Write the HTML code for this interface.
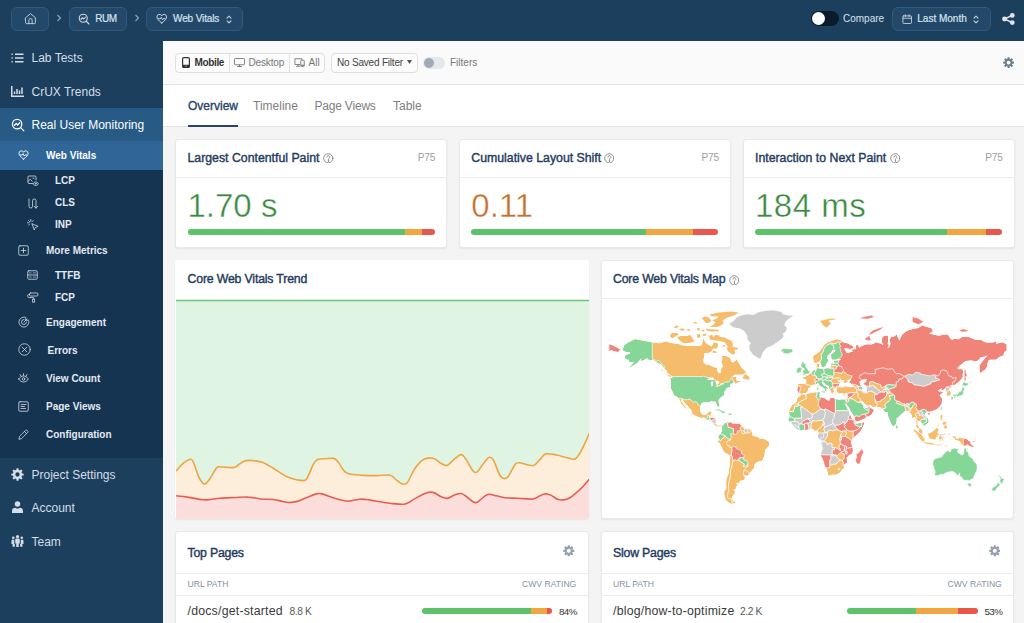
<!DOCTYPE html>
<html lang="en">
<head>
<meta charset="utf-8">
<title>Web Vitals - Real User Monitoring</title>
<style>
*{box-sizing:border-box;margin:0;padding:0}
html,body{width:1024px;height:623px;overflow:hidden}
body{font-family:"Liberation Sans",Arial,sans-serif;background:#f4f4f4;color:#1f3a5f;position:relative;-webkit-font-smoothing:antialiased}
.abs{position:absolute}
svg{display:block}
/* top bar */
#top{position:absolute;left:0;top:0;width:1024px;height:41px;background:#1c3f5e}
.crumb{position:absolute;top:7px;height:24px;border:1px solid #32587a;background:#224969;border-radius:6px;color:#d9e2ec;font-size:10px;line-height:22px;white-space:nowrap}
.crumb span{position:absolute;top:0;-webkit-text-stroke:.2px #d9e2ec}
.chev{position:absolute;top:13px;width:6px;height:10px}
/* sidebar */
#side{position:absolute;left:0;top:41px;width:163px;height:582px;background:#1c3f5e}
.nav1{position:absolute;left:0;width:163px;height:33px;color:#d4dde8;font-size:12px;line-height:33px}
.nav1 span{position:absolute;left:31.5px;top:1px;white-space:nowrap}
.nav1 svg{position:absolute;left:11px}
.nav2{position:absolute;left:0;width:163px;height:22px;color:#e3eaf2;font-size:10px;font-weight:bold;line-height:22px}
.nav2 span{position:absolute;top:.5px;white-space:nowrap}
.nav2 svg{position:absolute}
/* main */
#filter{position:absolute;left:163px;top:41px;width:861px;height:44px;background:#fafafa;border-bottom:1px solid #e4e4e4}
#tabs{position:absolute;left:163px;top:85px;width:861px;height:42px;background:#fff;border-bottom:1px solid #e2e2e2}
.tab{position:absolute;top:1px;height:41px;line-height:41px;font-size:12px;color:#808080;white-space:nowrap}
.ft{top:0;height:43px;line-height:43px;font-size:10px;white-space:nowrap}
.card{position:absolute;background:#fff;border-radius:3px;border:1px solid #e9e9e9;box-shadow:0 1px 2px rgba(0,0,0,.07)}
.in{position:absolute;left:-1px;top:-1px;right:-1px;bottom:-1px}
.ctitle{position:absolute;left:12px;font-size:12.3px;font-weight:normal;color:#233a5e;-webkit-text-stroke:.38px #233a5e;white-space:nowrap}
.p75{position:absolute;right:12px;font-size:10.2px;letter-spacing:-.3px;color:#a0a0a0}
.hr{position:absolute;left:0;right:0;height:1px;background:#ececec}
.big{position:absolute;left:12px;font-size:33px;font-weight:normal;white-space:nowrap;-webkit-text-stroke:.4px #fff}
.bar{position:absolute;height:6px;border-radius:3px;overflow:hidden;background:#5cc36a}
.bar i{position:absolute;top:0;height:6px}
.th{position:absolute;font-size:8.6px;color:#8792a0;letter-spacing:0;white-space:nowrap}
.url{position:absolute;font-size:12.3px;color:#3a3a3a;white-space:nowrap}
.cnt{position:absolute;font-size:10.2px;letter-spacing:-.4px;color:#5a5a5a;white-space:nowrap}
.pct{position:absolute;font-size:9.8px;letter-spacing:-.6px;color:#333;white-space:nowrap}
</style>
</head>
<body>
<div id="top">
<div class="crumb" style="left:11px;width:38px">
<svg class="abs" style="left:12px;top:4px" width="13" height="13" viewBox="0 0 24 24" fill="none" stroke="#c9d4e0" stroke-width="1.7" stroke-linejoin="round" stroke-linecap="round"><path d="M3 10.5 12 3l9 7.500V20a1.500 1.500 0 0 1-1.500 1.500h-15A1.500 1.500 0 0 1 3 20z"/><path d="M9 21.500V15a3 3 0 0 1 6 0v6.500"/></svg>
</div>
<svg class="chev" style="left:56px" viewBox="0 0 6 10" fill="none" stroke="#8ea3b8" stroke-width="1.200"><path d="M1.500 2 4.500 5 1.500 8"/></svg>
<div class="crumb" style="left:69px;width:58px">
<svg class="abs" style="left:8px;top:5px" width="12" height="12" viewBox="0 0 24 24" fill="none" stroke="#d3dce6" stroke-width="2.200" stroke-linecap="round" stroke-linejoin="round"><circle cx="10.500" cy="10.500" r="8"/><path d="M16.500 16.500 22 22"/><path d="M6 12.500 9 9.500 11.500 12 15 8"/></svg>
<span style="left:25.200px;letter-spacing:-.4px">RUM</span>
</div>
<svg class="chev" style="left:134px" viewBox="0 0 6 10" fill="none" stroke="#8ea3b8" stroke-width="1.200"><path d="M1.500 2 4.500 5 1.500 8"/></svg>
<div class="crumb" style="left:146px;width:97px">
<svg class="abs" style="left:8.500px;top:4.600px" width="11.500" height="11.500" viewBox="0 0 24 24" fill="none" stroke="#d3dce6" stroke-width="2" stroke-linecap="round" stroke-linejoin="round"><path d="M12 21C5 15.500 2 12 2 8.200A5.200 5.200 0 0 1 12 6a5.200 5.200 0 0 1 10 2.200C22 12 19 15.500 12 21z"/><path d="M5 12h4l2-3 2.500 5 1.500-2h4"/></svg>
<span style="left:26px;letter-spacing:-.12px">Web Vitals</span>
<svg class="abs" style="left:79px;top:7px" width="6" height="9" viewBox="0 0 6 9" fill="none" stroke="#c3cfdb" stroke-width="1.100" stroke-linecap="round" stroke-linejoin="round"><path d="M1 3.200 3 1.200 5 3.200M1 5.800 3 7.800 5 5.800"/></svg>
</div>
<div class="abs" style="left:811px;top:11px;width:28px;height:15px;border-radius:8px;background:#0c1a29"><div class="abs" style="left:1px;top:1px;width:13px;height:13px;border-radius:50%;background:#fff"></div></div>
<div class="abs" style="left:843px;top:12px;font-size:10px;line-height:13px;color:#dbe3ec">Compare</div>
<div class="crumb" style="left:892px;width:99px">
<svg class="abs" style="left:9px;top:6px" width="10.400" height="10.400" viewBox="0 0 22 22" fill="none" stroke="#d3dce6" stroke-width="1.800" stroke-linejoin="round" stroke-linecap="round"><rect x="2" y="4" width="18" height="16" rx="1.500"/><path d="M2 9h18M7 1.500v4M15 1.500v4"/></svg>
<span style="left:24.300px">Last Month</span>
<svg class="abs" style="left:80px;top:7px" width="6" height="9" viewBox="0 0 6 9" fill="none" stroke="#c3cfdb" stroke-width="1.100" stroke-linecap="round" stroke-linejoin="round"><path d="M1 3.200 3 1.200 5 3.200M1 5.800 3 7.800 5 5.800"/></svg>
</div>
<svg class="abs" style="left:1002px;top:13px" width="13" height="12" viewBox="0 0 26 24" fill="#dfe6ee"><circle cx="5" cy="12" r="4.800"/><circle cx="20.500" cy="4.800" r="4.800"/><circle cx="20.500" cy="19.200" r="4.800"/><path d="M5 12 20.500 4.800M5 12 20.500 19.200" stroke="#dfe6ee" stroke-width="3"/></svg>
</div>
<div id="side">
<div class="abs" style="left:0;top:128px;width:163px;height:289px;background:#153452"></div>
<div class="nav1" style="top:0.3px;"><svg style="left:11px;top:11.5px" width="13" height="10" viewBox="0 0 26 20" fill="none" stroke="#d4dde8" stroke-linecap="butt"><path d="M8 2.500h17M8 10h17M8 17.500h17" stroke-width="2.600"/><path d="M1 2.500h2.500M1 10h2.500M1 17.500h2.500" stroke-width="2.600"/></svg><span>Lab Tests</span></div>
<div class="nav1" style="top:33.7px;"><svg style="left:11px;top:11px" width="13" height="11" viewBox="0 0 26 22" fill="none" stroke="#d4dde8"><path d="M1.500 0v20.500H26" stroke-width="3"/><path d="M7 16v-5M12 16V6M17 16V9M22 16V3" stroke-width="3"/></svg><span>CrUX Trends</span></div>
<div class="nav1" style="top:67.0px;background:#275a85;color:#fff;"><svg style="left:11px;top:10px" width="14" height="14" viewBox="0 0 24 24" fill="none" stroke="#fff" stroke-width="2.200" stroke-linecap="round" stroke-linejoin="round"><circle cx="10.500" cy="10.500" r="8"/><path d="M16.500 16.500 22 22"/><path d="M6 12.500 9 9.500 11.500 12 15 8"/></svg><span>Real User Monitoring</span></div>
<div class="nav2" style="top:100.0px;height:29px;line-height:29px;background:#2f6697;color:#fff;"><svg style="left:18px;top:9px" width="11" height="10" viewBox="0 0 24 22" fill="none" stroke="#fff" stroke-width="2" stroke-linecap="round" stroke-linejoin="round"><path d="M12 20C5 14.500 2 11 2 7.200A5.200 5.200 0 0 1 12 5a5.200 5.200 0 0 1 10 2.200C22 11 19 14.500 12 20z"/><path d="M5 11h4l2-3 2.500 5 1.500-2h4"/></svg><span style="left:46px;top:.1px">Web Vitals</span></div>
<div class="nav2" style="top:128.5px;height:22px;line-height:22px;"><svg style="left:27px;top:5px" width="12" height="11" viewBox="0 0 24 22" fill="none" stroke="#d4dde8" stroke-width="1.6" stroke-linecap="round" stroke-linejoin="round"><path d="M10 17H4a2 2 0 0 1-2-2V4a2 2 0 0 1 2-2h12a2 2 0 0 1 2 2v6"/><path d="M2 13l4.500-4.500 4 4M12 6.500h2"/><path d="M12 17.500c1.500-2.700 3.500-3.500 5.500-3.500s4 .8 5.500 3.500c-1.500 2.700-3.500 3.500-5.500 3.500s-4-.8-5.500-3.500z"/><circle cx="17.500" cy="17.500" r="1"/></svg><span style="left:55px">LCP</span></div>
<div class="nav2" style="top:150.5px;height:22px;line-height:22px;"><svg style="left:27px;top:6px" width="12" height="11" viewBox="0 0 24 22" fill="none" stroke="#d4dde8" stroke-width="1.6" stroke-linecap="round" stroke-linejoin="round"><path d="M4 2v14.500a3.500 3.500 0 0 0 7 0V5.500a3.500 3.500 0 0 1 7 0V20"/><path d="M14.500 16.500l3.500 4 3.500-4"/></svg><span style="left:55px">CLS</span></div>
<div class="nav2" style="top:172.5px;height:22px;line-height:22px;"><svg style="left:27px;top:5px" width="12" height="12" viewBox="0 0 24 24" fill="none" stroke="#d4dde8" stroke-width="1.6" stroke-linecap="round" stroke-linejoin="round"><path d="M10 10l4.500 12 2-5 5-2z"/><path d="M7.500 1v3.500M1 7.500h3.500M3 3l2.200 2.200M12.500 3l-2.200 2.200M3 12.500l2.200-2.200"/></svg><span style="left:55px">INP</span></div>
<div class="nav2" style="top:198.0px;height:22px;line-height:22px;"><svg style="left:18px;top:5.5px" width="11" height="11" viewBox="0 0 22 22" fill="none" stroke="#d4dde8" stroke-width="1.6" stroke-linecap="round" stroke-linejoin="round"><rect x="1.500" y="1.500" width="19" height="19" rx="2.500"/><path d="M11 6.500v9M6.500 11h9"/></svg><span style="left:46px">More Metrics</span></div>
<div class="nav2" style="top:223.0px;height:22px;line-height:22px;"><svg style="left:27px;top:6px" width="11" height="10" viewBox="0 0 22 20" fill="none" stroke="#d4dde8" stroke-width="1.6" stroke-linecap="round" stroke-linejoin="round"><rect x="1.500" y="1.500" width="19" height="17" rx="2"/><path d="M1.500 10h19"/><path d="M5 5.800h3.500M5 14.200h3.500M12.500 5.800h4.500M12.500 14.200h4.500" stroke-width="1.200"/></svg><span style="left:55px">TTFB</span></div>
<div class="nav2" style="top:245.0px;height:22px;line-height:22px;"><svg style="left:27px;top:6px" width="12" height="11" viewBox="0 0 24 22" fill="none" stroke="#d4dde8" stroke-width="1.6" stroke-linecap="round" stroke-linejoin="round"><rect x="5" y="2" width="17" height="6" rx="2"/><path d="M5 5H3a1.500 1.500 0 0 0-1.500 1.500v3A1.500 1.500 0 0 0 3 11h9a1.500 1.500 0 0 1 1.500 1.500V14"/><path d="M12 14h3v6.500h-3z"/></svg><span style="left:55px">FCP</span></div>
<div class="nav2" style="top:270.0px;height:22px;line-height:22px;"><svg style="left:18px;top:5px" width="12" height="12" viewBox="0 0 24 24" fill="none" stroke="#d4dde8" stroke-width="1.6" stroke-linecap="round" stroke-linejoin="round"><path d="M13 2.200A10 10 0 1 0 21.800 11"/><path d="M12 7a5 5 0 1 0 5 5"/><path d="M12 12l6-6M15.500 2.500v6h6"/></svg><span style="left:46px">Engagement</span></div>
<div class="nav2" style="top:298.3px;height:22px;line-height:22px;"><svg style="left:18px;top:4px" width="13" height="13" viewBox="0 0 26 26" fill="none" stroke="#d4dde8" stroke-width="1.6" stroke-linecap="round" stroke-linejoin="round"><circle cx="13" cy="13" r="11.500"/><path d="M8.500 8.500l9 9M17.500 8.500l-9 9"/></svg><span style="left:47.5px">Errors</span></div>
<div class="nav2" style="top:326.3px;height:22px;line-height:22px;"><svg style="left:18px;top:6px" width="11" height="10" viewBox="0 0 22 20" fill="none" stroke="#d4dde8" stroke-width="1.6" stroke-linecap="round" stroke-linejoin="round"><path d="M1.500 12c2.500-4.500 6-6 9.500-6s7 1.500 9.500 6c-2.500 4.500-6 6-9.500 6s-7-1.500-9.500-6z"/><circle cx="11" cy="12" r="2.600"/><path d="M11 1.500V5M4 3l1.800 3M18 3l-1.800 3"/></svg><span style="left:46px">View Count</span></div>
<div class="nav2" style="top:354.3px;height:22px;line-height:22px;"><svg style="left:18px;top:5.5px" width="11" height="11" viewBox="0 0 22 22" fill="none" stroke="#d4dde8" stroke-width="1.6" stroke-linecap="round" stroke-linejoin="round"><rect x="1.500" y="1.500" width="19" height="19" rx="2.500"/><path d="M6 7h10M6 11h7M6 15h9"/></svg><span style="left:46px">Page Views</span></div>
<div class="nav2" style="top:382.3px;height:22px;line-height:22px;"><svg style="left:18px;top:5.5px" width="11" height="11" viewBox="0 0 22 22" fill="none" stroke="#d4dde8" stroke-width="1.6" stroke-linecap="round" stroke-linejoin="round"><path d="M2 20l1.200-5.500L15 2.800a2.300 2.300 0 0 1 3.300 0l.9.900a2.300 2.300 0 0 1 0 3.300L7.500 18.800z"/><path d="M13 5l4 4"/></svg><span style="left:46px">Configuration</span></div>
<div class="nav1" style="top:416.8px;"><svg style="left:11px;top:10px" width="13" height="13" viewBox="0 0 24 24"><g fill="#d4dde8"><rect x="10" y="0.500" width="4" height="6" rx="1" transform="rotate(0 12 12)"/><rect x="10" y="0.500" width="4" height="6" rx="1" transform="rotate(45 12 12)"/><rect x="10" y="0.500" width="4" height="6" rx="1" transform="rotate(90 12 12)"/><rect x="10" y="0.500" width="4" height="6" rx="1" transform="rotate(135 12 12)"/><rect x="10" y="0.500" width="4" height="6" rx="1" transform="rotate(180 12 12)"/><rect x="10" y="0.500" width="4" height="6" rx="1" transform="rotate(225 12 12)"/><rect x="10" y="0.500" width="4" height="6" rx="1" transform="rotate(270 12 12)"/><rect x="10" y="0.500" width="4" height="6" rx="1" transform="rotate(315 12 12)"/></g><circle cx="12" cy="12" r="6.300" fill="none" stroke="#d4dde8" stroke-width="4.600"/></svg><span>Project Settings</span></div>
<div class="nav1" style="top:450.0px;"><svg style="left:12px;top:10px" width="11" height="12" viewBox="0 0 22 24" fill="#d4dde8"><circle cx="11" cy="6" r="5.500"/><path d="M0 24v-4c0-4 3-6.500 6-6.500l5 2 5-2c3 0 6 2.500 6 6.500v4z"/></svg><span>Account</span></div>
<div class="nav1" style="top:483.8px;"><svg style="left:11px;top:10px" width="13" height="12" viewBox="0 0 26 24" fill="#d4dde8"><circle cx="13" cy="3.200" r="3.200"/><circle cx="4.500" cy="5.500" r="2.600"/><circle cx="21.500" cy="5.500" r="2.600"/><path d="M8.500 9.500c0-1.500 1-2.500 2.500-2.500h4c1.500 0 2.500 1 2.500 2.500V17h-2v7h-5v-7h-2z"/><path d="M1 12c0-1.500 1-2.500 2.500-2.500h3V18h1.200v5.500H3.200V18H1zM25 12c0-1.500-1-2.500-2.500-2.500h-3V18h-1.200v5.500h4.500V18H25z"/></svg><span>Team</span></div>
</div>
<div id="filter">
<div class="abs" style="left:12px;top:11.500px;width:150px;height:20px;border:1px solid #dfdfdf;border-radius:4px;background:#fcfcfc"></div>
<div class="abs" style="left:66px;top:12px;width:1px;height:19px;background:#e2e2e2"></div>
<div class="abs" style="left:126px;top:12px;width:1px;height:19px;background:#e2e2e2"></div>
<svg class="abs" style="left:19px;top:16px" width="8" height="11" viewBox="0 0 16 22"><rect x="1.200" y="1.200" width="13.600" height="19.600" rx="2.500" fill="none" stroke="#333" stroke-width="2.400"/><rect x="1.200" y="15.500" width="13.600" height="5" fill="#333"/><circle cx="8" cy="18" r="1.200" fill="#fff"/></svg>
<div class="abs ft" style="left:31.500px;color:#333;font-weight:bold;letter-spacing:-.35px">Mobile</div>
<svg class="abs" style="left:71px;top:17px" width="11" height="9" viewBox="0 0 22 18" fill="none" stroke="#777" stroke-width="1.800"><rect x="1" y="1" width="20" height="12.500" rx="1.500"/><path d="M6.500 17h9M11 13.500V17" stroke-width="2"/></svg>
<div class="abs ft" style="left:85.500px;color:#777;letter-spacing:-.15px">Desktop</div>
<svg class="abs" style="left:131px;top:17px" width="11" height="9" viewBox="0 0 22 18" fill="none" stroke="#777" stroke-width="1.800"><path d="M12 13H1.800V1.500h14V4M4 16.500h8M8 13v3.500" /><rect x="13.500" y="4.500" width="7" height="12.500" rx="1.200" fill="#fafafa"/><path d="M13.500 14.500h7" stroke-width="2.200"/></svg>
<div class="abs ft" style="left:145.500px;color:#777">All</div>
<div class="abs" style="left:168px;top:11.500px;width:87px;height:20px;border:1px solid #dfdfdf;border-radius:4px;background:#fcfcfc"></div>
<div class="abs ft" style="left:174px;color:#444;letter-spacing:-.2px">No Saved Filter</div>
<svg class="abs" style="left:244px;top:19px" width="5" height="4" viewBox="0 0 10 8"><path d="M0 0h10L5 8z" fill="#555"/></svg>
<div class="abs" style="left:260px;top:15.500px;width:22px;height:12px;border-radius:6px;background:#e4e9ee"><div class="abs" style="left:1px;top:1px;width:10px;height:10px;border-radius:50%;background:#a1abb5"></div></div>
<div class="abs ft" style="left:287px;color:#777">Filters</div>
<svg class="abs" style="left:839.5px;top:15.5px" width="11.2" height="11.2" viewBox="0 0 24 24"><g fill="#6d7e8f"><rect x="9.700" y="0.500" width="4.600" height="6" rx=".8" transform="rotate(0 12 12)"/><rect x="9.700" y="0.500" width="4.600" height="6" rx=".8" transform="rotate(45 12 12)"/><rect x="9.700" y="0.500" width="4.600" height="6" rx=".8" transform="rotate(90 12 12)"/><rect x="9.700" y="0.500" width="4.600" height="6" rx=".8" transform="rotate(135 12 12)"/><rect x="9.700" y="0.500" width="4.600" height="6" rx=".8" transform="rotate(180 12 12)"/><rect x="9.700" y="0.500" width="4.600" height="6" rx=".8" transform="rotate(225 12 12)"/><rect x="9.700" y="0.500" width="4.600" height="6" rx=".8" transform="rotate(270 12 12)"/><rect x="9.700" y="0.500" width="4.600" height="6" rx=".8" transform="rotate(315 12 12)"/></g><circle cx="12" cy="12" r="6.200" fill="none" stroke="#6d7e8f" stroke-width="4.200"/></svg>
</div>
<div id="tabs">
<div class="tab" style="left:25px;color:#28426c;-webkit-text-stroke:.35px #28426c">Overview</div>
<div class="abs" style="left:25px;top:39.500px;width:50px;height:2.500px;background:#28426c"></div>
<div class="tab" style="left:90px">Timeline</div>
<div class="tab" style="left:151.500px;letter-spacing:-.2px">Page Views</div>
<div class="tab" style="left:230px">Table</div>
</div>
<div id="content">
<div class="card" style="left:175px;top:139px;width:272.0px;height:108.800px"><div class="in" style="left:-0.5px"><div class="ctitle" style="top:12px;line-height:15px">Largest Contentful Paint</div><svg class="abs" style="left:147.5px;top:13.6px" width="10.600" height="10.600" viewBox="0 0 20 20" fill="none" stroke="#777" stroke-width="1.500" stroke-linecap="round"><circle cx="10" cy="10" r="8.700"/><path d="M7.300 7.800a2.800 2.800 0 1 1 4.200 2.400c-1 .6-1.500 1.100-1.500 2.100"/><circle cx="10" cy="15" r=".6" fill="#777"/></svg><div class="p75" style="top:12px;line-height:13px">P75</div><div class="hr" style="top:38px"></div><div class="big" style="top:47px;line-height:40px;color:#3b8b3f">1.70 s</div><div class="bar" style="left:12px;top:90.4px;width:247px;background:linear-gradient(90deg,#5cc36a 217.5px,#f1a640 217.5px,#f1a640 233.7px,#e9564b 233.7px)"></div></div></div>
<div class="card" style="left:459px;top:139px;width:271.8px;height:108.800px"><div class="in" style="left:-0.7px"><div class="ctitle" style="top:12px;line-height:15px">Cumulative Layout Shift</div><svg class="abs" style="left:144.5px;top:13.6px" width="10.600" height="10.600" viewBox="0 0 20 20" fill="none" stroke="#777" stroke-width="1.500" stroke-linecap="round"><circle cx="10" cy="10" r="8.700"/><path d="M7.300 7.800a2.800 2.800 0 1 1 4.200 2.400c-1 .6-1.500 1.100-1.500 2.100"/><circle cx="10" cy="15" r=".6" fill="#777"/></svg><div class="p75" style="top:12px;line-height:13px">P75</div><div class="hr" style="top:38px"></div><div class="big" style="top:47px;line-height:40px;color:#c8702b">0.11</div><div class="bar" style="left:12px;top:90.4px;width:247px;background:linear-gradient(90deg,#5cc36a 175.0px,#f1a640 175.0px,#f1a640 221.8px,#e9564b 221.8px)"></div></div></div>
<div class="card" style="left:743px;top:139px;width:271.5px;height:108.800px"><div class="in" style="left:-1.0px"><div class="ctitle" style="top:12px;line-height:15px">Interaction to Next Paint</div><svg class="abs" style="left:146.5px;top:13.6px" width="10.600" height="10.600" viewBox="0 0 20 20" fill="none" stroke="#777" stroke-width="1.500" stroke-linecap="round"><circle cx="10" cy="10" r="8.700"/><path d="M7.300 7.800a2.800 2.800 0 1 1 4.200 2.400c-1 .6-1.500 1.100-1.500 2.100"/><circle cx="10" cy="15" r=".6" fill="#777"/></svg><div class="p75" style="top:12px;line-height:13px">P75</div><div class="hr" style="top:38px"></div><div class="big" style="top:47px;line-height:40px;letter-spacing:.5px;color:#3b8b3f">184 ms</div><div class="bar" style="left:12px;top:90.4px;width:247px;background:linear-gradient(90deg,#5cc36a 191.7px,#f1a640 191.7px,#f1a640 231.2px,#e9564b 231.2px)"></div></div></div>
<div class="card" style="left:175px;top:260.300px;width:413.800px;height:258.700px;overflow:hidden;border:0"><div class="in" style="left:.5px;top:0"><div class="ctitle" style="top:11.900px;line-height:15px;letter-spacing:-.17px">Core Web Vitals Trend</div><svg class="abs" style="left:0;top:0" width="413.3" height="258.7" viewBox="0 0 413.3 258.7"><rect x="0" y="40" width="413.3" height="218.7" fill="#dff4e2"/><path d="M0.1 211.1C1.3 209.8 5.1 205.1 7.4 203.2C9.7 201.3 12.2 199.8 13.8 199.5C15.4 199.2 15.7 198.7 17.1 201.5C18.5 204.3 20.8 212.5 22.4 216.1C24.0 219.7 25.4 221.9 26.7 223.2C27.9 224.4 28.7 224.4 29.9 223.6C31.2 222.8 32.4 220.8 34.2 218.2C36.0 215.6 38.9 209.8 40.7 207.9C42.5 206.0 42.1 207.1 45.0 207.0C47.9 206.9 54.9 208.0 57.9 207.5C61.0 207.0 61.5 205.3 63.3 204.2C65.1 203.1 66.3 201.6 68.6 201.0C70.9 200.4 74.1 200.3 77.2 200.6C80.2 200.8 83.5 201.2 86.9 202.5C90.3 203.8 93.7 206.2 97.6 208.5C101.5 210.8 106.5 214.6 110.5 216.5C114.5 218.4 118.3 219.2 121.3 219.9C124.4 220.5 127.0 221.0 128.8 220.4C130.6 219.8 130.6 219.2 132.0 216.5C133.4 213.8 135.8 207.0 137.4 204.2C139.0 201.4 139.7 200.4 141.7 199.5C143.7 198.6 146.5 198.9 149.2 198.7C151.9 198.5 155.7 197.8 157.8 198.4C160.0 199.0 160.3 199.9 162.1 202.1C163.9 204.2 166.3 209.3 168.5 211.3C170.7 213.3 171.8 213.6 175.0 214.3C178.2 215.0 183.6 215.2 187.9 215.4C192.2 215.6 196.4 215.6 200.8 215.6C205.2 215.6 211.1 214.6 214.2 215.2C217.3 215.8 217.5 217.9 219.5 219.3C221.5 220.7 224.0 223.3 226.0 223.8C228.0 224.3 229.2 225.1 231.4 222.5C233.5 219.9 236.2 212.3 238.9 208.5C241.6 204.7 244.5 201.2 247.5 199.5C250.5 197.8 254.2 197.6 257.1 198.2C260.0 198.8 262.4 202.0 264.7 203.2C267.0 204.4 269.0 206.1 271.1 205.5C273.2 204.9 275.2 201.7 277.5 199.9C279.8 198.1 283.0 194.6 285.1 194.6C287.2 194.6 288.4 197.2 290.4 199.9C292.4 202.6 295.1 208.7 296.9 210.7C298.7 212.7 299.4 213.1 301.2 211.8C303.0 210.6 305.6 205.6 307.6 203.2C309.6 200.8 311.4 197.9 313.0 197.4C314.6 196.8 315.5 197.0 317.3 199.9C319.1 202.8 321.9 211.9 323.7 215.0C325.5 218.1 326.6 218.3 328.0 218.6C329.4 218.8 330.5 218.8 332.3 216.5C334.1 214.2 337.0 207.2 338.8 204.9C340.6 202.6 340.1 202.6 343.1 202.7C346.1 202.8 353.6 206.2 357.0 205.7C360.4 205.2 361.4 201.9 363.5 199.9C365.6 197.9 367.0 194.7 369.9 193.9C372.8 193.1 377.1 194.3 380.7 195.0C384.3 195.7 388.4 197.1 391.4 197.8C394.4 198.5 396.8 200.0 398.9 199.1C401.0 198.2 402.5 195.3 404.3 192.4C406.1 189.5 408.2 184.9 409.7 181.7C411.2 178.5 412.7 174.5 413.3 173.1L413.3 258.7L0 258.7Z" fill="#fdeedb"/><path d="M0.1 235.8C2.0 236.0 7.3 236.4 11.7 237.1C16.1 237.7 22.9 239.3 26.7 239.7C30.4 240.1 31.3 239.8 34.2 239.5C37.1 239.2 39.8 238.5 43.9 238.2C48.0 237.9 54.4 237.7 59.0 237.5C63.6 237.3 67.5 236.8 71.8 237.1C76.1 237.3 80.4 238.6 84.7 239.0C89.0 239.4 94.0 239.1 97.6 239.5C101.2 239.9 103.5 240.9 106.2 241.4C108.9 241.9 111.2 242.5 113.7 242.5C116.2 242.5 118.3 242.3 121.3 241.4C124.4 240.5 128.8 238.3 132.0 237.1C135.2 235.8 138.3 234.4 140.6 233.9C142.9 233.4 143.1 233.2 146.0 233.9C148.9 234.6 154.1 236.8 157.8 238.0C161.6 239.2 165.6 240.3 168.5 240.8C171.4 241.3 172.5 241.1 175.0 240.8C177.5 240.5 181.1 239.4 183.6 239.2C186.1 239.0 187.1 239.2 190.0 239.5C192.9 239.8 196.2 240.5 200.8 241.2C205.4 241.9 212.7 243.1 217.4 243.6C222.1 244.1 225.6 244.8 229.2 244.0C232.8 243.2 235.5 240.4 238.9 238.6C242.3 236.8 246.6 234.2 249.6 233.2C252.6 232.2 254.6 231.8 257.1 232.4C259.6 232.9 262.4 235.5 264.7 236.5C267.0 237.5 268.8 238.6 271.1 238.4C273.4 238.1 276.3 235.8 278.6 235.0C280.9 234.2 283.1 233.2 285.1 233.5C287.1 233.8 288.4 235.1 290.4 236.5C292.4 237.9 295.1 240.8 296.9 241.8C298.7 242.8 299.4 243.1 301.2 242.3C303.0 241.5 305.6 238.4 307.6 237.1C309.6 235.8 310.9 234.5 313.0 234.3C315.1 234.1 317.8 235.2 320.5 235.8C323.2 236.4 325.5 237.4 329.1 237.8C332.7 238.2 337.4 238.0 342.0 238.2C346.6 238.4 353.2 239.5 357.0 239.0C360.8 238.5 362.4 236.2 364.5 235.4C366.6 234.5 368.1 233.9 369.9 233.9C371.7 233.9 373.3 234.5 375.3 235.4C377.3 236.3 379.7 238.6 381.7 239.3C383.7 240.1 385.1 240.1 387.1 239.9C389.1 239.7 391.1 239.5 393.6 238.0C396.1 236.5 399.7 233.3 402.2 231.1C404.7 228.9 406.8 226.7 408.6 224.7C410.4 222.7 412.5 220.2 413.3 219.3L413.3 258.7L0 258.7Z" fill="#fbdedc"/><path d="M0 40.600H413.3" stroke="#68c772" stroke-width="1.500" fill="none"/><path d="M0.1 211.1C1.3 209.8 5.1 205.1 7.4 203.2C9.7 201.3 12.2 199.8 13.8 199.5C15.4 199.2 15.7 198.7 17.1 201.5C18.5 204.3 20.8 212.5 22.4 216.1C24.0 219.7 25.4 221.9 26.7 223.2C27.9 224.4 28.7 224.4 29.9 223.6C31.2 222.8 32.4 220.8 34.2 218.2C36.0 215.6 38.9 209.8 40.7 207.9C42.5 206.0 42.1 207.1 45.0 207.0C47.9 206.9 54.9 208.0 57.9 207.5C61.0 207.0 61.5 205.3 63.3 204.2C65.1 203.1 66.3 201.6 68.6 201.0C70.9 200.4 74.1 200.3 77.2 200.6C80.2 200.8 83.5 201.2 86.9 202.5C90.3 203.8 93.7 206.2 97.6 208.5C101.5 210.8 106.5 214.6 110.5 216.5C114.5 218.4 118.3 219.2 121.3 219.9C124.4 220.5 127.0 221.0 128.8 220.4C130.6 219.8 130.6 219.2 132.0 216.5C133.4 213.8 135.8 207.0 137.4 204.2C139.0 201.4 139.7 200.4 141.7 199.5C143.7 198.6 146.5 198.9 149.2 198.7C151.9 198.5 155.7 197.8 157.8 198.4C160.0 199.0 160.3 199.9 162.1 202.1C163.9 204.2 166.3 209.3 168.5 211.3C170.7 213.3 171.8 213.6 175.0 214.3C178.2 215.0 183.6 215.2 187.9 215.4C192.2 215.6 196.4 215.6 200.8 215.6C205.2 215.6 211.1 214.6 214.2 215.2C217.3 215.8 217.5 217.9 219.5 219.3C221.5 220.7 224.0 223.3 226.0 223.8C228.0 224.3 229.2 225.1 231.4 222.5C233.5 219.9 236.2 212.3 238.9 208.5C241.6 204.7 244.5 201.2 247.5 199.5C250.5 197.8 254.2 197.6 257.1 198.2C260.0 198.8 262.4 202.0 264.7 203.2C267.0 204.4 269.0 206.1 271.1 205.5C273.2 204.9 275.2 201.7 277.5 199.9C279.8 198.1 283.0 194.6 285.1 194.6C287.2 194.6 288.4 197.2 290.4 199.9C292.4 202.6 295.1 208.7 296.9 210.7C298.7 212.7 299.4 213.1 301.2 211.8C303.0 210.6 305.6 205.6 307.6 203.2C309.6 200.8 311.4 197.9 313.0 197.4C314.6 196.8 315.5 197.0 317.3 199.9C319.1 202.8 321.9 211.9 323.7 215.0C325.5 218.1 326.6 218.3 328.0 218.6C329.4 218.8 330.5 218.8 332.3 216.5C334.1 214.2 337.0 207.2 338.8 204.9C340.6 202.6 340.1 202.6 343.1 202.7C346.1 202.8 353.6 206.2 357.0 205.7C360.4 205.2 361.4 201.9 363.5 199.9C365.6 197.9 367.0 194.7 369.9 193.9C372.8 193.1 377.1 194.3 380.7 195.0C384.3 195.7 388.4 197.1 391.4 197.8C394.4 198.5 396.8 200.0 398.9 199.1C401.0 198.2 402.5 195.3 404.3 192.4C406.1 189.5 408.2 184.9 409.7 181.7C411.2 178.5 412.7 174.5 413.3 173.1" stroke="#eca540" stroke-width="1.600" fill="none"/><path d="M0.1 235.8C2.0 236.0 7.3 236.4 11.7 237.1C16.1 237.7 22.9 239.3 26.7 239.7C30.4 240.1 31.3 239.8 34.2 239.5C37.1 239.2 39.8 238.5 43.9 238.2C48.0 237.9 54.4 237.7 59.0 237.5C63.6 237.3 67.5 236.8 71.8 237.1C76.1 237.3 80.4 238.6 84.7 239.0C89.0 239.4 94.0 239.1 97.6 239.5C101.2 239.9 103.5 240.9 106.2 241.4C108.9 241.9 111.2 242.5 113.7 242.5C116.2 242.5 118.3 242.3 121.3 241.4C124.4 240.5 128.8 238.3 132.0 237.1C135.2 235.8 138.3 234.4 140.6 233.9C142.9 233.4 143.1 233.2 146.0 233.9C148.9 234.6 154.1 236.8 157.8 238.0C161.6 239.2 165.6 240.3 168.5 240.8C171.4 241.3 172.5 241.1 175.0 240.8C177.5 240.5 181.1 239.4 183.6 239.2C186.1 239.0 187.1 239.2 190.0 239.5C192.9 239.8 196.2 240.5 200.8 241.2C205.4 241.9 212.7 243.1 217.4 243.6C222.1 244.1 225.6 244.8 229.2 244.0C232.8 243.2 235.5 240.4 238.9 238.6C242.3 236.8 246.6 234.2 249.6 233.2C252.6 232.2 254.6 231.8 257.1 232.4C259.6 232.9 262.4 235.5 264.7 236.5C267.0 237.5 268.8 238.6 271.1 238.4C273.4 238.1 276.3 235.8 278.6 235.0C280.9 234.2 283.1 233.2 285.1 233.5C287.1 233.8 288.4 235.1 290.4 236.5C292.4 237.9 295.1 240.8 296.9 241.8C298.7 242.8 299.4 243.1 301.2 242.3C303.0 241.5 305.6 238.4 307.6 237.1C309.6 235.8 310.9 234.5 313.0 234.3C315.1 234.1 317.8 235.2 320.5 235.8C323.2 236.4 325.5 237.4 329.1 237.8C332.7 238.2 337.4 238.0 342.0 238.2C346.6 238.4 353.2 239.5 357.0 239.0C360.8 238.5 362.4 236.2 364.5 235.4C366.6 234.5 368.1 233.9 369.9 233.9C371.7 233.9 373.3 234.5 375.3 235.4C377.3 236.3 379.7 238.6 381.7 239.3C383.7 240.1 385.1 240.1 387.1 239.9C389.1 239.7 391.1 239.5 393.6 238.0C396.1 236.5 399.7 233.3 402.2 231.1C404.7 228.9 406.8 226.7 408.6 224.7C410.4 222.7 412.5 220.2 413.3 219.3" stroke="#e85d51" stroke-width="1.600" fill="none"/></svg></div></div>
<div class="card" style="left:601px;top:260.300px;width:413.300px;height:258.700px;overflow:hidden"><div class="in"><div class="ctitle" style="top:11.900px;line-height:15px;letter-spacing:-.18px">Core Web Vitals Map</div><svg class="abs" style="left:127.8px;top:14.5px" width="10.600" height="10.600" viewBox="0 0 20 20" fill="none" stroke="#777" stroke-width="1.500" stroke-linecap="round"><circle cx="10" cy="10" r="8.700"/><path d="M7.300 7.800a2.800 2.800 0 1 1 4.200 2.400c-1 .6-1.500 1.100-1.500 2.100"/><circle cx="10" cy="15" r=".6" fill="#777"/></svg><div class="hr" style="top:37.500px"></div><svg class="abs" style="left:0;top:0" width="413.3" height="258.7" viewBox="0 0 413.3 258.7"><defs><clipPath id="cNA"><path d="M21.5 90.1L23.7 85.1L27.0 82.8L34.2 79.2L41.3 80.8L51.3 82.6L57.9 83.2L65.6 81.2L68.9 82.8L77.7 83.9L81.1 85.3L87.7 86.0L94.3 86.0L100.9 85.3L102.0 78.0L104.8 82.8L107.5 84.7L110.8 86.6L112.5 82.4L116.4 82.8L117.1 85.6L116.4 88.4L111.9 88.8L110.8 91.2L107.5 92.9L103.7 92.9L102.6 99.8L102.2 101.7L104.8 104.6L108.6 104.9L113.0 107.2L116.0 107.6L116.4 110.7L118.0 113.2L119.7 113.0L119.7 109.2L121.9 106.2L120.2 101.9L121.3 98.9L120.8 95.7L125.2 95.9L129.6 98.1L130.1 101.4L132.3 102.5L134.6 100.6L135.7 99.3L138.4 103.8L140.6 107.7L143.9 110.7L145.4 112.2L141.7 114.8L136.2 114.7L133.5 114.8L130.1 118.0L128.5 119.7L131.2 117.3L135.7 116.6L135.1 118.7L135.7 120.5L139.5 121.2L140.6 119.7L139.5 121.7L136.2 122.8L134.0 124.2L134.0 122.1L132.9 122.1L129.6 123.9L128.7 125.5L129.6 126.6L125.4 127.9L125.0 129.4L123.5 130.7L123.0 132.6L123.3 134.8L120.8 136.5L118.6 138.3L117.1 140.7L118.4 145.1L118.1 147.0L116.6 145.8L115.5 143.7L114.4 141.3L112.5 141.5L109.7 140.9L108.1 142.3L105.9 141.9L103.1 141.8L99.8 143.7L99.4 146.1L98.9 150.2L100.6 153.8L102.6 155.1L105.3 154.6L107.0 152.5L107.5 151.7L110.8 151.3L110.3 153.6L109.5 155.9L108.9 157.7L111.9 157.7L114.9 158.7L114.5 161.5L114.6 163.3L115.8 164.9L117.5 165.7L119.1 164.9L121.4 165.8L120.9 167.4L120.4 166.3L118.9 165.7L118.1 167.3L116.4 166.3L115.3 166.2L114.5 165.8L113.0 164.3L112.2 163.3L110.3 161.1L108.1 160.4L105.1 159.3L103.1 157.5L100.4 157.9L96.7 156.7L92.6 155.0L90.4 152.6L90.7 150.4L87.7 147.2L86.0 145.2L84.4 143.7L82.4 140.9L81.8 139.7L80.2 139.1L80.5 141.3L82.4 143.9L84.4 146.7L85.2 148.2L86.0 149.3L85.1 149.1L83.0 147.2L81.6 145.1L80.0 143.7L79.1 140.9L77.6 138.3L76.1 136.4L73.8 135.8L72.2 132.9L71.7 131.6L70.0 128.4L69.8 124.8L70.0 120.5L69.3 117.4L71.7 118.7L71.1 116.6L69.5 115.1L66.2 113.0L65.6 110.7L63.4 108.5L62.3 106.9L59.5 103.8L56.2 102.5L52.9 100.1L48.0 99.8L45.8 98.1L43.0 99.8L39.7 100.9L40.8 97.8L38.0 100.6L36.4 102.7L33.6 104.6L30.3 106.6L27.0 108.0L29.8 106.2L33.1 101.9L28.1 102.0L28.1 99.8L24.8 98.9L23.7 96.8L25.4 94.7L29.2 93.8L29.2 92.1L25.4 92.1Z"/></clipPath><clipPath id="cSA"><path d="M121.5 165.9L123.0 165.1L123.5 163.6L124.8 163.0L127.4 161.9L128.2 163.2L129.6 162.0L131.5 163.7L134.0 163.7L136.2 164.0L138.4 163.6L139.5 164.9L140.6 166.0L142.3 167.7L143.9 168.8L147.2 169.0L149.4 170.1L150.5 170.8L151.6 173.4L151.6 175.4L153.9 176.2L157.2 177.1L158.3 178.4L161.0 178.6L163.8 179.3L166.0 180.7L168.0 181.5L168.4 183.7L168.0 185.9L166.0 187.9L164.3 189.8L163.8 192.6L163.6 195.5L162.7 197.8L161.6 200.1L160.5 201.2L157.7 201.5L155.5 202.6L153.3 204.7L153.2 207.7L151.3 210.1L149.1 212.5L147.8 214.4L146.4 215.5L144.5 215.4L142.4 214.4L143.7 216.9L143.3 219.4L139.0 220.7L138.1 222.7L135.1 223.3L136.2 225.3L134.8 226.6L134.6 228.7L132.3 230.0L134.0 232.1L132.3 235.0L130.7 236.4L131.2 239.0L131.2 240.1L134.6 242.8L132.9 243.4L130.1 243.6L127.4 242.3L125.2 240.1L124.1 237.8L123.5 234.2L123.5 231.4L125.2 229.4L125.7 226.6L125.2 224.6L125.5 221.4L125.7 218.4L126.8 216.3L127.9 213.2L127.9 209.5L129.0 205.9L129.1 201.8L129.4 197.8L129.1 195.8L127.4 194.3L124.1 192.6L122.6 190.7L121.6 188.7L120.2 185.9L118.8 183.1L117.2 182.0L117.1 180.4L118.2 179.0L118.6 178.2L117.5 177.8L117.7 176.5L118.6 174.8L119.7 174.0L120.2 172.6L121.5 171.2L121.3 168.8L120.9 167.4Z"/></clipPath><clipPath id="cAFRICA"><path d="M200.3 134.2L204.4 135.0L206.8 134.0L210.1 132.8L214.5 132.6L217.8 132.3L218.9 132.6L218.2 134.5L218.7 135.8L217.8 136.7L219.5 137.4L221.4 137.8L223.7 138.5L225.6 140.1L228.3 140.9L228.9 139.1L228.9 138.3L232.2 138.0L234.4 139.2L238.8 140.1L241.0 139.5L242.4 139.8L244.5 139.7L245.3 141.9L244.6 143.9L242.8 141.3L243.9 143.9L246.0 148.4L247.6 150.7L247.9 153.6L249.3 155.3L250.4 158.2L252.6 160.4L254.4 161.5L254.6 162.7L255.9 163.9L258.6 163.0L263.3 162.2L262.8 164.3L260.8 168.8L259.7 170.4L257.5 173.0L254.2 176.0L252.6 177.5L251.1 178.5L250.4 180.4L249.8 182.6L250.4 184.8L251.5 187.0L251.7 191.5L250.9 193.4L247.6 195.2L246.0 197.5L245.2 197.5L245.8 200.1L246.0 202.4L243.2 204.1L243.0 207.7L241.0 209.5L239.9 211.3L237.7 213.2L235.1 214.4L231.1 214.6L228.9 215.4L227.1 214.6L226.9 211.9L225.6 208.9L223.9 205.9L222.8 201.2L221.1 197.8L219.8 194.9L220.6 192.1L221.9 188.7L221.4 185.4L220.4 182.0L219.8 180.4L217.3 178.2L216.7 176.3L217.3 174.5L217.5 172.6L217.3 171.0L216.2 170.3L214.5 170.5L213.4 170.7L211.8 168.6L209.6 168.4L207.9 168.9L204.6 170.1L201.8 169.7L198.5 170.5L196.3 169.3L194.1 167.8L192.1 166.0L191.4 164.3L190.3 163.2L188.4 161.7L187.5 159.1L188.6 157.6L188.8 154.2L188.0 151.9L189.2 149.0L190.8 146.1L192.5 144.1L194.7 142.7L196.0 141.5L196.0 139.5L197.4 137.3L199.3 136.4Z"/></clipPath><clipPath id="cEURASIA"><path d="M200.6 133.9L199.9 133.1L198.6 132.4L197.0 132.6L197.1 130.7L196.3 130.3L197.1 127.5L196.7 124.8L198.0 123.9L201.8 124.3L204.8 124.3L205.5 122.7L205.6 120.8L204.4 119.1L201.6 118.0L201.6 117.4L205.0 117.0L204.8 115.6L207.0 115.8L208.6 114.0L210.7 113.1L211.5 111.9L212.1 110.7L214.5 110.0L216.3 109.4L215.8 106.9L215.8 104.6L218.4 103.5L218.2 105.4L217.8 107.7L218.8 109.2L220.0 108.9L222.5 109.2L225.0 108.5L227.2 108.2L228.3 108.6L230.0 107.4L230.0 104.6L231.1 103.5L233.3 104.3L233.6 102.5L232.7 101.1L237.7 100.6L240.1 99.8L238.2 98.8L234.4 99.4L232.1 99.9L230.3 98.1L230.3 94.7L234.4 91.2L234.7 90.1L231.1 89.9L230.3 92.1L226.1 95.9L225.8 98.6L227.5 100.1L225.2 103.8L224.4 105.8L222.6 106.9L221.0 106.9L220.6 105.4L219.3 102.2L218.6 101.1L215.6 102.8L214.5 103.0L212.9 101.4L212.3 98.1L212.5 96.1L216.2 93.7L218.9 91.5L221.1 88.4L223.3 85.1L226.7 82.6L230.0 81.4L235.1 79.6L237.7 79.8L241.0 81.2L243.2 82.8L246.5 83.3L252.0 86.0L252.4 88.4L248.7 89.0L244.3 88.1L243.2 88.4L244.9 91.2L245.4 92.4L248.2 93.3L248.7 92.1L251.5 91.9L250.9 89.4L254.8 89.0L255.3 84.7L257.5 85.3L258.1 87.9L259.7 86.4L265.3 84.3L269.7 84.5L273.0 83.7L274.1 82.2L278.5 83.3L280.7 84.1L282.4 85.3L280.7 81.8L280.7 78.8L282.9 75.7L286.8 75.7L287.3 78.8L286.8 83.7L287.9 85.6L286.2 88.4L288.4 86.6L289.5 83.7L288.4 79.8L290.1 77.1L292.8 76.7L295.6 74.6L297.2 77.8L298.3 80.8L299.5 77.8L301.7 74.0L306.1 70.7L311.6 69.1L317.1 68.0L321.8 65.2L324.8 66.8L330.3 68.0L332.0 71.4L328.1 73.5L331.4 74.2L338.1 75.7L342.5 74.6L346.9 74.6L349.6 78.8L351.3 79.8L353.5 78.8L357.9 79.2L361.2 76.7L367.8 77.1L372.2 78.8L374.5 80.0L380.0 79.8L383.3 81.8L385.5 82.6L391.0 82.4L394.9 81.8L395.4 83.7L400.9 82.2L405.3 84.1L408.6 85.3L413.1 87.5L416.6 89.4L414.2 92.1L410.9 91.5L407.5 90.3L405.3 91.2L403.1 92.1L402.6 95.6L398.7 96.8L394.9 99.8L389.9 99.8L387.7 100.1L386.6 103.3L386.4 105.8L385.3 108.0L383.3 110.4L381.6 111.0L379.6 113.7L378.6 110.7L378.5 105.4L380.0 103.3L383.3 98.9L386.6 95.6L383.3 96.8L380.0 97.3L377.2 100.6L374.5 101.4L370.6 100.6L364.5 100.9L361.2 103.8L359.0 105.4L356.3 108.2L358.5 109.2L360.7 108.9L362.3 110.7L361.8 113.7L361.8 117.3L359.6 120.1L356.8 122.8L353.5 125.1L351.3 125.5L351.0 125.8L349.9 127.5L347.4 129.0L348.4 130.6L349.5 132.6L349.5 134.5L349.1 135.2L347.4 135.5L346.1 135.8L346.3 133.9L346.6 131.7L344.7 131.4L345.0 129.4L343.9 128.8L341.4 130.1L340.6 130.3L340.8 127.7L338.1 129.8L336.7 130.1L338.1 132.0L340.0 131.6L341.9 132.4L339.5 133.9L338.4 135.2L339.7 137.0L341.1 139.1L341.1 140.3L340.8 141.9L340.3 143.7L338.9 146.1L337.5 147.6L335.9 149.0L332.9 150.2L329.8 151.3L328.1 151.6L328.5 152.7L327.6 151.3L325.9 151.2L324.5 152.4L323.5 154.2L324.3 155.9L326.3 157.6L327.4 160.4L327.2 162.7L325.0 163.9L324.5 164.8L322.6 165.9L322.5 164.3L321.0 163.7L320.3 162.4L319.3 161.5L318.1 160.5L317.1 160.6L316.9 162.7L316.2 165.1L317.4 166.2L317.7 167.7L319.1 168.2L319.5 168.6L320.9 170.4L321.0 172.3L321.7 173.9L321.0 174.0L318.5 172.2L317.7 170.4L317.4 168.4L316.5 167.7L315.2 166.6L315.4 164.3L315.7 162.1L315.1 159.9L314.6 157.3L313.6 156.7L311.9 157.8L310.8 157.4L311.0 155.3L309.9 153.3L308.6 152.2L308.1 150.4L306.6 150.4L305.0 151.0L302.8 151.3L302.2 152.8L300.6 153.6L297.6 156.8L295.4 158.2L295.4 160.8L294.8 164.0L293.9 165.1L293.1 165.6L292.3 166.4L291.0 164.6L289.5 161.5L288.4 158.7L287.3 155.9L287.1 154.2L287.0 151.9L286.4 151.7L284.6 152.1L282.9 150.4L282.4 149.0L281.3 148.4L280.4 147.2L277.4 146.9L274.7 147.0L271.3 146.5L269.9 145.1L268.9 144.6L266.9 145.4L264.7 144.3L262.8 142.5L261.9 141.1L260.6 140.9L259.7 141.9L260.6 143.7L262.2 145.5L262.8 147.2L263.4 146.1L263.7 147.2L263.6 148.1L266.4 148.2L268.6 146.3L268.9 145.7L269.2 147.8L271.5 148.9L272.8 150.2L271.3 152.5L270.6 154.2L268.6 155.4L267.5 156.1L265.8 156.8L264.4 158.1L260.8 159.6L256.7 161.2L254.8 161.3L254.0 159.0L253.9 157.0L252.0 154.2L250.0 151.3L248.7 148.4L247.1 146.1L245.4 143.7L245.3 141.9L244.5 139.7L245.3 138.3L245.6 137.3L246.4 135.5L246.4 133.9L246.7 133.0L244.9 133.0L243.2 133.8L240.6 132.9L238.8 133.5L237.1 132.9L236.0 131.0L235.7 129.4L235.7 128.7L237.1 128.1L238.8 127.3L241.5 127.2L243.8 126.2L245.4 126.0L247.6 127.2L250.6 127.5L252.6 126.8L252.6 125.5L250.9 124.3L248.5 122.5L247.6 121.7L249.3 120.8L250.1 119.1L248.2 119.4L245.7 120.3L247.1 121.6L245.8 122.1L243.8 122.9L242.6 121.6L243.9 120.6L241.9 119.9L240.7 120.1L239.6 121.7L238.3 123.8L237.6 125.1L237.8 126.7L238.7 127.2L236.9 127.5L235.7 128.1L235.5 127.7L233.3 127.7L233.1 128.8L231.9 128.3L232.2 130.1L233.3 131.4L233.3 131.7L232.2 132.1L232.4 133.3L231.5 133.3L230.7 132.9L230.2 131.4L229.4 129.7L228.2 128.1L228.3 126.4L227.2 125.5L224.4 124.2L223.3 122.8L222.6 121.9L221.8 122.1L221.9 121.2L220.5 121.6L220.4 123.1L221.8 124.2L222.8 125.8L224.4 126.3L227.2 128.5L227.2 128.8L225.6 128.3L225.1 129.2L225.7 130.1L225.0 131.0L224.1 131.4L224.4 130.1L223.9 128.7L222.6 127.7L220.4 126.6L218.4 125.0L218.1 123.6L216.5 122.9L215.1 123.9L212.6 124.4L210.3 124.7L210.3 125.8L209.2 127.1L207.1 128.5L206.5 129.6L207.0 130.5L206.0 131.7L204.6 132.9L201.9 133.0Z"/></clipPath><clipPath id="cmap"><rect x="8.3" y="40" width="397.1" height="215"/></clipPath></defs><g clip-path="url(#cmap)" stroke="#fff" stroke-width=".7" stroke-linejoin="round"><g clip-path="url(#cNA)"><path d="M21.5 90.1L23.7 85.1L27.0 82.8L34.2 79.2L41.3 80.8L51.3 82.6L57.9 83.2L65.6 81.2L68.9 82.8L77.7 83.9L81.1 85.3L87.7 86.0L94.3 86.0L100.9 85.3L102.0 78.0L104.8 82.8L107.5 84.7L110.8 86.6L112.5 82.4L116.4 82.8L117.1 85.6L116.4 88.4L111.9 88.8L110.8 91.2L107.5 92.9L103.7 92.9L102.6 99.8L102.2 101.7L104.8 104.6L108.6 104.9L113.0 107.2L116.0 107.6L116.4 110.7L118.0 113.2L119.7 113.0L119.7 109.2L121.9 106.2L120.2 101.9L121.3 98.9L120.8 95.7L125.2 95.9L129.6 98.1L130.1 101.4L132.3 102.5L134.6 100.6L135.7 99.3L138.4 103.8L140.6 107.7L143.9 110.7L145.4 112.2L141.7 114.8L136.2 114.7L133.5 114.8L130.1 118.0L128.5 119.7L131.2 117.3L135.7 116.6L135.1 118.7L135.7 120.5L139.5 121.2L140.6 119.7L139.5 121.7L136.2 122.8L134.0 124.2L134.0 122.1L132.9 122.1L129.6 123.9L128.7 125.5L129.6 126.6L125.4 127.9L125.0 129.4L123.5 130.7L123.0 132.6L123.3 134.8L120.8 136.5L118.6 138.3L117.1 140.7L118.4 145.1L118.1 147.0L116.6 145.8L115.5 143.7L114.4 141.3L112.5 141.5L109.7 140.9L108.1 142.3L105.9 141.9L103.1 141.8L99.8 143.7L99.4 146.1L98.9 150.2L100.6 153.8L102.6 155.1L105.3 154.6L107.0 152.5L107.5 151.7L110.8 151.3L110.3 153.6L109.5 155.9L108.9 157.7L111.9 157.7L114.9 158.7L114.5 161.5L114.6 163.3L115.8 164.9L117.5 165.7L119.1 164.9L121.4 165.8L120.9 167.4L120.4 166.3L118.9 165.7L118.1 167.3L116.4 166.3L115.3 166.2L114.5 165.8L113.0 164.3L112.2 163.3L110.3 161.1L108.1 160.4L105.1 159.3L103.1 157.5L100.4 157.9L96.7 156.7L92.6 155.0L90.4 152.6L90.7 150.4L87.7 147.2L86.0 145.2L84.4 143.7L82.4 140.9L81.8 139.7L80.2 139.1L80.5 141.3L82.4 143.9L84.4 146.7L85.2 148.2L86.0 149.3L85.1 149.1L83.0 147.2L81.6 145.1L80.0 143.7L79.1 140.9L77.6 138.3L76.1 136.4L73.8 135.8L72.2 132.9L71.7 131.6L70.0 128.4L69.8 124.8L70.0 120.5L69.3 117.4L71.7 118.7L71.1 116.6L69.5 115.1L66.2 113.0L65.6 110.7L63.4 108.5L62.3 106.9L59.5 103.8L56.2 102.5L52.9 100.1L48.0 99.8L45.8 98.1L43.0 99.8L39.7 100.9L40.8 97.8L38.0 100.6L36.4 102.7L33.6 104.6L30.3 106.6L27.0 108.0L29.8 106.2L33.1 101.9L28.1 102.0L28.1 99.8L24.8 98.9L23.7 96.8L25.4 94.7L29.2 93.8L29.2 92.1L25.4 92.1Z" fill="#f5bd6b" stroke="none"/><path d="M63.4 116.6L101.8 116.6L102.3 116.0L108.1 118.0L109.3 117.6L113.3 119.5L113.6 120.1L115.8 121.7L115.9 124.8L115.1 125.9L115.8 126.6L119.7 125.1L119.4 124.3L122.4 124.0L122.6 123.2L124.1 122.1L127.9 122.1L129.3 120.3L130.5 118.8L131.8 119.0L132.0 121.0L132.9 122.4L140.6 128.8L124.1 150.7L107.5 148.4L100.9 146.7L99.7 146.2L97.4 145.5L97.1 144.3L95.7 142.3L93.7 141.5L93.0 142.5L91.5 141.8L89.3 139.1L87.5 139.1L87.5 139.7L84.4 139.7L80.2 138.3L77.6 138.3L63.4 138.9Z" fill="#86d698"/><path d="M51.3 77.8L51.3 99.3L53.5 99.6L55.1 101.6L57.6 100.3L59.7 102.4L61.4 105.1L63.4 106.2L63.4 107.4L62.3 108.8L52.4 110.7L8.3 115.1L8.3 77.8Z" fill="#86d698"/><path d="M105.1 159.3L105.1 158.4L105.9 157.5L107.0 157.5L106.4 156.2L106.4 155.6L108.4 155.6L108.4 157.6L109.5 157.9L108.4 158.8L108.1 159.4L107.4 160.2L106.4 160.4Z" fill="#86d698"/><path d="M108.4 155.6L108.4 157.6L109.5 157.9L110.3 157.6L110.3 154.8L109.4 154.8Z" fill="#cccccc"/><path d="M108.4 158.8L109.5 157.9L110.8 157.0L115.3 157.6L115.1 158.8L113.3 159.1L112.3 160.0L111.2 160.1L110.5 161.0L110.0 160.5L109.2 160.0Z" fill="#f08478"/><path d="M107.4 160.2L108.1 159.4L108.4 158.8L109.2 160.0L110.0 160.5L109.7 161.2L107.5 160.8Z" fill="#cccccc"/><path d="M110.5 161.0L111.2 160.1L112.3 160.0L113.3 159.1L115.1 158.8L115.3 163.2L114.5 163.3L112.4 163.0L111.4 162.7L109.7 161.2Z" fill="#cccccc"/><path d="M105.3 119.8L108.6 118.0L111.9 117.3L113.3 119.7L110.8 120.1L107.5 119.8Z" fill="#fff" stroke="none"/><path d="M110.0 126.2L111.6 126.2L112.5 121.4L110.8 121.2L109.7 122.8Z" fill="#fff" stroke="none"/><path d="M113.6 120.8L116.9 120.8L118.6 122.4L116.7 124.6L115.8 124.6L114.7 122.8L114.7 121.4Z" fill="#fff" stroke="none"/><path d="M114.9 126.6L119.7 125.2L119.7 124.8L117.5 125.4L115.3 125.9Z" fill="#fff" stroke="none"/><path d="M118.9 124.4L122.6 124.2L122.4 123.2L119.7 123.6Z" fill="#fff" stroke="none"/></g><g clip-path="url(#cSA)"><path d="M121.5 165.9L123.0 165.1L123.5 163.6L124.8 163.0L127.4 161.9L128.2 163.2L129.6 162.0L131.5 163.7L134.0 163.7L136.2 164.0L138.4 163.6L139.5 164.9L140.6 166.0L142.3 167.7L143.9 168.8L147.2 169.0L149.4 170.1L150.5 170.8L151.6 173.4L151.6 175.4L153.9 176.2L157.2 177.1L158.3 178.4L161.0 178.6L163.8 179.3L166.0 180.7L168.0 181.5L168.4 183.7L168.0 185.9L166.0 187.9L164.3 189.8L163.8 192.6L163.6 195.5L162.7 197.8L161.6 200.1L160.5 201.2L157.7 201.5L155.5 202.6L153.3 204.7L153.2 207.7L151.3 210.1L149.1 212.5L147.8 214.4L146.4 215.5L144.5 215.4L142.4 214.4L143.7 216.9L143.3 219.4L139.0 220.7L138.1 222.7L135.1 223.3L136.2 225.3L134.8 226.6L134.6 228.7L132.3 230.0L134.0 232.1L132.3 235.0L130.7 236.4L131.2 239.0L131.2 240.1L134.6 242.8L132.9 243.4L130.1 243.6L127.4 242.3L125.2 240.1L124.1 237.8L123.5 234.2L123.5 231.4L125.2 229.4L125.7 226.6L125.2 224.6L125.5 221.4L125.7 218.4L126.8 216.3L127.9 213.2L127.9 209.5L129.0 205.9L129.1 201.8L129.4 197.8L129.1 195.8L127.4 194.3L124.1 192.6L122.6 190.7L121.6 188.7L120.2 185.9L118.8 183.1L117.2 182.0L117.1 180.4L118.2 179.0L118.6 178.2L117.5 177.8L117.7 176.5L118.6 174.8L119.7 174.0L120.2 172.6L121.5 171.2L121.3 168.8L120.9 167.4Z" fill="#f5bd6b" stroke="none"/><path d="M119.7 173.9L121.3 174.7L123.7 175.5L125.7 177.8L129.6 180.0L130.1 176.5L129.6 173.7L132.9 174.1L132.3 172.3L132.6 168.6L129.6 167.7L127.4 167.3L126.8 165.4L126.3 163.2L128.2 162.3L128.5 161.0L118.6 164.9L119.1 169.9Z" fill="#86d698"/><path d="M119.7 173.9L121.3 174.7L123.7 175.5L123.5 177.1L120.8 178.9L119.7 180.9L118.3 180.3L118.1 179.2L116.4 178.7L116.4 173.7Z" fill="#86d698"/><path d="M128.5 161.0L128.2 162.3L126.3 163.2L126.8 165.4L127.4 167.3L129.6 167.7L132.6 168.6L132.3 172.3L132.9 174.1L134.6 174.5L136.2 173.4L136.2 171.0L139.5 170.4L139.8 169.7L139.1 168.8L140.6 166.0L141.7 165.4L139.5 162.7Z" fill="#f08478"/><path d="M140.6 166.0L139.1 168.8L139.8 169.7L140.6 170.4L140.8 172.6L141.9 174.0L143.9 173.3L142.8 171.0L143.7 169.3L143.9 168.4L143.4 166.6Z" fill="#f5bd6b"/><path d="M143.9 168.4L143.7 169.3L142.8 171.0L143.9 173.3L146.7 172.9L147.2 171.5L146.8 169.9L147.2 168.4Z" fill="#cccccc"/><path d="M130.1 187.6L131.0 189.4L130.7 192.1L130.1 194.7L131.2 197.2L132.0 201.0L134.0 199.8L135.7 200.4L137.6 200.3L138.4 197.8L142.6 197.8L143.4 195.5L140.4 193.4L140.6 190.6L137.3 189.4L134.8 188.1L134.8 186.2L132.9 186.7Z" fill="#f08478"/><path d="M137.6 200.3L138.4 197.8L142.6 197.8L143.0 200.2L145.4 200.4L146.9 202.4L146.6 204.3L145.3 206.4L142.2 206.2L143.3 204.0L140.6 202.4L139.0 201.5Z" fill="#86d698"/><path d="M116.9 180.3L118.1 179.2L118.3 180.3L119.7 180.9L120.8 178.9L123.5 177.1L123.7 175.5L125.7 177.8L129.6 180.0L126.5 181.1L125.4 183.5L126.8 185.9L128.9 185.9L128.9 187.6L130.1 187.6L131.0 189.4L130.7 192.1L130.1 194.7L129.1 195.8L128.5 196.6L120.8 193.2L115.3 182.0Z" fill="#f5bd6b"/><path d="M129.1 195.8L130.1 194.7L131.2 197.2L132.0 201.0L131.4 203.0L131.2 205.9L129.8 209.5L129.3 213.2L129.6 215.6L128.5 220.1L127.6 224.6L127.7 230.0L126.8 234.2L126.3 236.4L127.1 238.3L130.7 238.9L131.2 239.3L131.1 242.9L134.0 243.9L129.6 246.2L120.8 238.6L123.0 222.0L126.3 197.8Z" fill="#f5bd6b"/><path d="M132.0 201.0L134.0 199.8L135.7 200.4L137.6 200.3L139.0 201.5L140.6 202.4L143.3 204.0L142.2 206.2L145.3 206.4L146.6 204.3L147.5 206.0L145.3 207.5L143.3 209.7L142.6 212.5L142.4 214.4L145.0 218.2L140.6 224.6L137.3 235.7L136.2 243.9L134.0 243.9L131.1 242.9L131.2 239.3L130.7 238.9L127.1 238.3L126.3 236.4L126.8 234.2L127.7 230.0L127.6 224.6L128.5 220.1L129.6 215.6L129.3 213.2L129.8 209.5L131.2 205.9L131.4 203.0Z" fill="#f5bd6b"/><path d="M142.6 212.5L143.3 209.7L145.0 210.5L147.8 212.5L148.1 214.0L148.3 215.6L143.9 216.3L142.4 214.4Z" fill="#f5bd6b"/><path d="M147.2 168.4L146.8 169.9L147.2 171.5L146.7 172.9L148.9 172.9L149.9 170.8L150.5 169.3Z" fill="#f5bd6b"/></g><g clip-path="url(#cAFRICA)"><path d="M200.3 134.2L204.4 135.0L206.8 134.0L210.1 132.8L214.5 132.6L217.8 132.3L218.9 132.6L218.2 134.5L218.7 135.8L217.8 136.7L219.5 137.4L221.4 137.8L223.7 138.5L225.6 140.1L228.3 140.9L228.9 139.1L228.9 138.3L232.2 138.0L234.4 139.2L238.8 140.1L241.0 139.5L242.4 139.8L244.5 139.7L245.3 141.9L244.6 143.9L242.8 141.3L243.9 143.9L246.0 148.4L247.6 150.7L247.9 153.6L249.3 155.3L250.4 158.2L252.6 160.4L254.4 161.5L254.6 162.7L255.9 163.9L258.6 163.0L263.3 162.2L262.8 164.3L260.8 168.8L259.7 170.4L257.5 173.0L254.2 176.0L252.6 177.5L251.1 178.5L250.4 180.4L249.8 182.6L250.4 184.8L251.5 187.0L251.7 191.5L250.9 193.4L247.6 195.2L246.0 197.5L245.2 197.5L245.8 200.1L246.0 202.4L243.2 204.1L243.0 207.7L241.0 209.5L239.9 211.3L237.7 213.2L235.1 214.4L231.1 214.6L228.9 215.4L227.1 214.6L226.9 211.9L225.6 208.9L223.9 205.9L222.8 201.2L221.1 197.8L219.8 194.9L220.6 192.1L221.9 188.7L221.4 185.4L220.4 182.0L219.8 180.4L217.3 178.2L216.7 176.3L217.3 174.5L217.5 172.6L217.3 171.0L216.2 170.3L214.5 170.5L213.4 170.7L211.8 168.6L209.6 168.4L207.9 168.9L204.6 170.1L201.8 169.7L198.5 170.5L196.3 169.3L194.1 167.8L192.1 166.0L191.4 164.3L190.3 163.2L188.4 161.7L187.5 159.1L188.6 157.6L188.8 154.2L188.0 151.9L189.2 149.0L190.8 146.1L192.5 144.1L194.7 142.7L196.0 141.5L196.0 139.5L197.4 137.3L199.3 136.4Z" fill="#cccccc" stroke="none"/><path d="M184.7 133.9L204.4 133.9L204.9 135.8L205.5 138.6L202.8 139.8L197.2 142.9L197.2 144.5L193.6 149.0L192.5 151.6L186.9 151.6Z" fill="#f5bd6b"/><path d="M204.4 133.9L204.9 135.8L205.5 138.6L202.8 139.8L197.2 142.9L197.2 144.5L201.5 147.2L208.1 151.9L210.3 154.2L213.2 153.6L220.0 149.0L217.3 145.5L217.7 141.3L216.7 138.9L215.1 136.7L215.8 135.2L216.3 131.4Z" fill="#f5bd6b"/><path d="M216.3 131.4L215.8 135.2L215.1 136.7L216.7 138.9L217.7 140.9L218.2 139.5L219.6 138.3L219.6 137.4L221.1 135.2L220.0 131.4Z" fill="#86d698"/><path d="M219.6 137.0L219.6 138.3L218.2 139.5L217.7 141.3L217.3 145.5L220.0 149.0L222.5 150.0L224.4 149.0L233.3 153.6L234.4 153.0L234.4 139.2L234.4 136.4L223.3 136.4Z" fill="#f08478"/><path d="M234.4 136.4L234.4 150.7L248.2 150.7L247.1 147.2L246.0 143.1L245.3 141.9L244.5 139.6L243.2 137.6Z" fill="#86d698"/><path d="M186.9 151.6L192.5 151.6L192.5 149.6L193.6 149.0L193.6 146.1L197.2 146.1L197.2 144.5L201.5 147.2L199.6 147.2L200.7 157.0L201.0 158.2L196.3 158.2L194.1 158.2L193.3 159.0L190.8 157.0L188.6 157.6L186.9 157.6Z" fill="#86d698"/><path d="M186.9 157.6L188.6 157.6L190.8 157.0L193.3 159.0L194.2 161.7L191.7 161.4L188.3 161.8L186.9 161.8Z" fill="#86d698"/><path d="M197.4 171.0L198.5 169.3L197.6 167.1L198.0 164.1L200.0 163.7L200.7 163.9L203.7 164.8L203.8 169.9L203.5 171.0Z" fill="#86d698"/><path d="M203.8 169.9L203.7 164.8L203.7 163.2L206.8 163.1L207.5 166.0L208.1 168.7L207.9 170.4L204.0 171.0Z" fill="#f08478"/><path d="M200.7 163.9L203.7 164.8L203.7 163.2L206.8 163.1L207.9 163.1L209.2 162.2L209.3 161.3L207.0 158.7L204.6 159.6L202.1 160.8L200.7 162.7Z" fill="#f08478"/><path d="M209.8 168.8L209.8 165.4L210.8 162.4L211.2 160.4L214.5 161.0L217.8 160.6L221.7 160.2L222.8 162.1L221.7 164.3L219.8 167.7L218.4 167.8L216.3 170.7L213.4 171.2L210.1 169.0Z" fill="#f5bd6b"/><path d="M216.3 170.7L218.4 167.8L219.8 167.7L221.7 164.3L222.8 162.1L222.5 161.0L223.9 164.3L222.2 164.6L223.9 167.1L222.8 169.3L224.7 173.0L221.4 173.0L217.5 172.9L216.5 171.5Z" fill="#f5bd6b"/><path d="M233.3 165.8L236.0 164.8L237.7 165.0L239.9 164.0L242.1 162.1L243.4 161.9L243.2 164.3L244.5 165.9L243.2 166.8L245.7 169.4L244.3 170.8L241.0 171.4L239.9 171.4L237.1 169.9L234.7 167.3Z" fill="#f08478"/><path d="M243.2 166.8L244.5 165.9L243.2 164.3L244.6 163.4L245.4 162.1L247.1 159.5L248.7 159.1L250.9 159.3L253.6 161.5L252.9 163.2L254.2 163.4L254.2 164.9L256.4 166.0L259.7 166.6L256.4 169.9L253.1 170.8L250.7 171.2L248.7 171.4L246.5 170.5L245.7 169.4Z" fill="#f08478"/><path d="M247.1 159.5L248.7 159.1L250.9 159.3L253.6 161.5L254.4 161.5L255.3 161.0L249.8 154.2L247.1 155.9Z" fill="#f08478"/><path d="M252.0 177.4L252.0 172.1L253.1 170.8L256.4 169.9L259.7 166.6L260.6 166.6L260.6 163.0L264.2 161.0L264.2 165.4L260.8 171.0L255.3 176.5L253.1 178.7Z" fill="#f08478"/><path d="M254.2 162.7L254.2 163.4L254.2 164.9L256.4 166.0L259.7 166.6L260.6 166.6L260.6 162.5L257.5 162.4L255.3 163.2Z" fill="#86d698"/><path d="M252.9 163.2L253.6 161.5L254.4 161.5L254.8 162.5L254.2 163.3Z" fill="#cccccc"/><path d="M244.3 170.8L245.7 169.4L246.5 170.5L248.7 171.4L250.7 171.2L252.0 172.1L252.0 177.4L253.1 178.7L250.9 181.5L250.0 180.6L248.3 178.7L244.3 176.5L244.3 174.8L245.4 173.5Z" fill="#f5bd6b"/><path d="M241.0 171.4L244.3 170.8L245.4 173.5L244.3 174.8L244.3 176.5L240.4 176.6L239.4 176.8L239.6 174.5L241.3 173.0Z" fill="#f5bd6b"/><path d="M220.3 181.8L221.1 180.5L222.8 180.8L224.4 179.3L226.3 176.0L226.7 172.6L227.3 170.7L228.3 169.9L231.6 170.8L234.7 169.7L237.1 169.9L239.9 171.4L241.0 171.4L241.3 173.0L239.6 174.5L239.4 176.8L238.8 178.5L239.1 180.4L239.3 182.6L240.7 184.5L238.7 184.8L238.1 185.7L238.3 187.1L238.1 188.7L239.7 188.9L239.7 190.3L237.7 189.8L236.6 188.5L234.7 187.8L233.6 188.0L233.2 187.5L231.3 187.8L230.8 185.9L231.0 183.5L228.3 183.1L228.2 184.2L226.2 184.4L225.1 181.9L221.1 181.9Z" fill="#f5bd6b"/><path d="M238.8 178.5L239.4 176.8L240.4 176.6L240.8 178.0L240.3 180.3L239.1 180.4Z" fill="#cccccc"/><path d="M240.4 176.6L244.3 176.5L248.3 178.7L250.0 180.6L250.9 181.5L252.0 184.2L251.8 186.9L248.7 188.0L245.4 188.3L245.0 186.0L243.2 185.8L241.0 184.9L240.7 184.5L239.3 182.6L239.1 180.4L240.3 180.3L240.8 178.0Z" fill="#f08478"/><path d="M231.1 189.8L233.3 189.8L233.6 188.0L234.7 187.8L236.6 188.5L237.7 189.8L239.7 190.3L239.7 188.9L238.1 188.7L238.3 187.1L238.1 185.7L238.7 184.8L240.7 184.5L241.0 184.9L243.2 185.8L243.4 187.6L243.5 190.8L240.2 192.1L240.3 192.7L238.7 193.2L236.6 195.5L234.7 195.2L232.5 194.9L231.1 193.4Z" fill="#f08478"/><path d="M243.2 185.8L245.0 186.0L245.4 188.3L245.0 190.4L246.4 192.0L245.7 194.4L244.6 193.2L244.9 191.6L243.5 190.8L243.4 187.6Z" fill="#f08478"/><path d="M245.4 188.3L248.7 188.0L251.8 186.9L253.1 189.8L252.0 194.3L246.5 198.9L246.5 203.6L243.2 205.9L242.1 205.7L242.0 204.5L242.1 202.4L241.3 200.5L242.6 199.2L243.2 197.5L242.9 196.4L243.2 194.0L240.3 192.7L240.2 192.1L243.5 190.8L244.9 191.6L244.6 193.2L245.7 194.4L246.4 192.0L245.0 190.4Z" fill="#f08478"/><path d="M234.7 195.2L236.6 195.5L238.7 193.2L240.3 192.7L243.2 194.0L242.9 196.4L243.2 197.5L242.6 199.2L241.3 200.5L239.2 200.3L237.7 199.6L237.4 198.3L235.7 197.3Z" fill="#f5bd6b"/><path d="M218.9 194.6L221.7 194.7L227.2 194.8L232.5 194.9L234.7 195.2L232.7 196.0L230.0 195.8L230.0 200.1L228.9 200.1L228.9 207.6L226.7 208.2L225.0 207.8L222.2 207.7L218.9 200.1Z" fill="#f08478"/><path d="M225.0 207.8L226.7 208.2L228.9 207.6L228.9 203.3L231.1 205.3L232.2 203.9L234.9 204.3L236.6 201.9L239.2 200.3L241.3 200.5L242.1 202.4L242.0 204.5L242.1 205.7L243.2 205.9L244.3 209.5L237.7 216.9L225.6 216.9L223.3 208.3Z" fill="#f5bd6b"/><path d="M236.7 209.0L238.3 207.8L239.2 209.0L237.8 210.2Z" fill="#cccccc"/><path d="M193.3 159.0L194.1 158.2L201.0 158.2L200.7 157.0L199.6 147.2L201.5 147.2L208.1 151.9L210.3 154.2L211.4 154.1L211.4 157.0L210.7 158.3L207.0 158.7L204.6 159.6L202.1 160.8L200.7 162.7L200.7 163.9L200.0 163.7L198.0 164.1L197.6 163.2L196.9 161.8L194.2 161.7Z" fill="#cccccc"/><path d="M207.0 158.7L210.7 158.3L211.4 157.0L211.4 154.1L213.2 153.6L220.0 149.0L222.5 150.0L223.3 149.6L224.4 152.5L223.9 156.7L221.7 160.2L217.8 160.6L214.5 161.0L211.2 160.4L210.8 162.4L209.3 161.3Z" fill="#cccccc"/><path d="M221.7 160.2L223.9 156.7L224.4 152.5L223.3 149.6L224.4 149.0L233.3 153.6L233.3 157.9L231.6 159.9L231.3 161.3L232.1 163.2L230.0 164.9L227.8 165.4L225.0 166.9L223.9 167.1L222.2 164.6L223.9 164.3L222.5 161.0Z" fill="#cccccc"/><path d="M233.3 153.6L234.4 153.0L234.4 150.7L248.2 150.7L249.4 155.3L247.6 156.5L247.1 159.5L245.4 162.1L244.6 163.4L243.2 164.3L243.4 161.9L242.1 162.1L239.9 164.0L237.7 165.0L236.0 164.8L233.3 165.8L232.1 163.2L231.3 161.3L231.6 159.9L233.3 157.9Z" fill="#cccccc"/><path d="M222.8 169.3L223.9 167.1L225.0 166.9L227.8 165.4L230.0 164.9L232.1 163.2L233.3 165.8L234.7 167.3L237.1 169.9L234.7 169.7L231.6 170.8L228.3 169.9L227.3 170.7L227.2 171.5L224.7 173.0Z" fill="#cccccc"/><path d="M220.3 181.8L221.1 181.9L225.1 181.9L226.2 184.4L228.2 184.2L228.3 183.1L231.0 183.5L230.8 185.9L231.3 187.8L233.2 187.5L233.3 189.8L231.1 189.8L231.1 193.4L232.5 194.9L227.2 194.8L221.7 194.7L218.9 194.6L218.9 181.8Z" fill="#cccccc"/><path d="M228.9 200.1L230.0 200.1L230.0 195.8L232.7 196.0L234.7 195.2L235.7 197.3L237.4 198.3L237.7 199.6L239.2 200.3L236.6 201.9L234.9 204.3L232.2 203.9L231.1 205.3L228.9 203.3Z" fill="#cccccc"/><path d="M218.9 179.8L221.1 180.5L222.8 180.8L224.4 179.3L226.3 176.0L226.7 172.6L227.2 171.5L224.7 173.0L221.4 173.0L222.6 174.0L222.7 176.0L222.1 178.0L220.6 177.8L219.5 178.3Z" fill="#cccccc"/><path d="M189.7 163.2L191.7 161.4L194.2 161.7L196.9 161.8L197.6 163.2L198.0 164.1L197.6 167.1L196.4 167.2L195.1 166.2L194.1 164.3L192.5 165.4L191.4 164.9Z" fill="#cccccc"/><path d="M194.0 167.8L195.1 166.2L196.4 167.2L197.6 167.1L198.5 169.3L198.5 171.0L195.8 170.4Z" fill="#cccccc"/><path d="M208.1 168.7L207.5 166.0L206.8 163.1L207.9 163.1L209.2 162.2L210.8 162.4L209.8 165.4L209.8 168.8L209.0 169.3Z" fill="#cccccc"/><path d="M186.9 151.6L192.5 151.6L192.5 149.6L193.6 149.0L193.6 146.1L197.2 146.1L197.2 144.1L192.2 144.1L186.9 144.9Z" fill="#f5bd6b"/></g><g clip-path="url(#cEURASIA)"><path d="M200.6 133.9L199.9 133.1L198.6 132.4L197.0 132.6L197.1 130.7L196.3 130.3L197.1 127.5L196.7 124.8L198.0 123.9L201.8 124.3L204.8 124.3L205.5 122.7L205.6 120.8L204.4 119.1L201.6 118.0L201.6 117.4L205.0 117.0L204.8 115.6L207.0 115.8L208.6 114.0L210.7 113.1L211.5 111.9L212.1 110.7L214.5 110.0L216.3 109.4L215.8 106.9L215.8 104.6L218.4 103.5L218.2 105.4L217.8 107.7L218.8 109.2L220.0 108.9L222.5 109.2L225.0 108.5L227.2 108.2L228.3 108.6L230.0 107.4L230.0 104.6L231.1 103.5L233.3 104.3L233.6 102.5L232.7 101.1L237.7 100.6L240.1 99.8L238.2 98.8L234.4 99.4L232.1 99.9L230.3 98.1L230.3 94.7L234.4 91.2L234.7 90.1L231.1 89.9L230.3 92.1L226.1 95.9L225.8 98.6L227.5 100.1L225.2 103.8L224.4 105.8L222.6 106.9L221.0 106.9L220.6 105.4L219.3 102.2L218.6 101.1L215.6 102.8L214.5 103.0L212.9 101.4L212.3 98.1L212.5 96.1L216.2 93.7L218.9 91.5L221.1 88.4L223.3 85.1L226.7 82.6L230.0 81.4L235.1 79.6L237.7 79.8L241.0 81.2L243.2 82.8L246.5 83.3L252.0 86.0L252.4 88.4L248.7 89.0L244.3 88.1L243.2 88.4L244.9 91.2L245.4 92.4L248.2 93.3L248.7 92.1L251.5 91.9L250.9 89.4L254.8 89.0L255.3 84.7L257.5 85.3L258.1 87.9L259.7 86.4L265.3 84.3L269.7 84.5L273.0 83.7L274.1 82.2L278.5 83.3L280.7 84.1L282.4 85.3L280.7 81.8L280.7 78.8L282.9 75.7L286.8 75.7L287.3 78.8L286.8 83.7L287.9 85.6L286.2 88.4L288.4 86.6L289.5 83.7L288.4 79.8L290.1 77.1L292.8 76.7L295.6 74.6L297.2 77.8L298.3 80.8L299.5 77.8L301.7 74.0L306.1 70.7L311.6 69.1L317.1 68.0L321.8 65.2L324.8 66.8L330.3 68.0L332.0 71.4L328.1 73.5L331.4 74.2L338.1 75.7L342.5 74.6L346.9 74.6L349.6 78.8L351.3 79.8L353.5 78.8L357.9 79.2L361.2 76.7L367.8 77.1L372.2 78.8L374.5 80.0L380.0 79.8L383.3 81.8L385.5 82.6L391.0 82.4L394.9 81.8L395.4 83.7L400.9 82.2L405.3 84.1L408.6 85.3L413.1 87.5L416.6 89.4L414.2 92.1L410.9 91.5L407.5 90.3L405.3 91.2L403.1 92.1L402.6 95.6L398.7 96.8L394.9 99.8L389.9 99.8L387.7 100.1L386.6 103.3L386.4 105.8L385.3 108.0L383.3 110.4L381.6 111.0L379.6 113.7L378.6 110.7L378.5 105.4L380.0 103.3L383.3 98.9L386.6 95.6L383.3 96.8L380.0 97.3L377.2 100.6L374.5 101.4L370.6 100.6L364.5 100.9L361.2 103.8L359.0 105.4L356.3 108.2L358.5 109.2L360.7 108.9L362.3 110.7L361.8 113.7L361.8 117.3L359.6 120.1L356.8 122.8L353.5 125.1L351.3 125.5L351.0 125.8L349.9 127.5L347.4 129.0L348.4 130.6L349.5 132.6L349.5 134.5L349.1 135.2L347.4 135.5L346.1 135.8L346.3 133.9L346.6 131.7L344.7 131.4L345.0 129.4L343.9 128.8L341.4 130.1L340.6 130.3L340.8 127.7L338.1 129.8L336.7 130.1L338.1 132.0L340.0 131.6L341.9 132.4L339.5 133.9L338.4 135.2L339.7 137.0L341.1 139.1L341.1 140.3L340.8 141.9L340.3 143.7L338.9 146.1L337.5 147.6L335.9 149.0L332.9 150.2L329.8 151.3L328.1 151.6L328.5 152.7L327.6 151.3L325.9 151.2L324.5 152.4L323.5 154.2L324.3 155.9L326.3 157.6L327.4 160.4L327.2 162.7L325.0 163.9L324.5 164.8L322.6 165.9L322.5 164.3L321.0 163.7L320.3 162.4L319.3 161.5L318.1 160.5L317.1 160.6L316.9 162.7L316.2 165.1L317.4 166.2L317.7 167.7L319.1 168.2L319.5 168.6L320.9 170.4L321.0 172.3L321.7 173.9L321.0 174.0L318.5 172.2L317.7 170.4L317.4 168.4L316.5 167.7L315.2 166.6L315.4 164.3L315.7 162.1L315.1 159.9L314.6 157.3L313.6 156.7L311.9 157.8L310.8 157.4L311.0 155.3L309.9 153.3L308.6 152.2L308.1 150.4L306.6 150.4L305.0 151.0L302.8 151.3L302.2 152.8L300.6 153.6L297.6 156.8L295.4 158.2L295.4 160.8L294.8 164.0L293.9 165.1L293.1 165.6L292.3 166.4L291.0 164.6L289.5 161.5L288.4 158.7L287.3 155.9L287.1 154.2L287.0 151.9L286.4 151.7L284.6 152.1L282.9 150.4L282.4 149.0L281.3 148.4L280.4 147.2L277.4 146.9L274.7 147.0L271.3 146.5L269.9 145.1L268.9 144.6L266.9 145.4L264.7 144.3L262.8 142.5L261.9 141.1L260.6 140.9L259.7 141.9L260.6 143.7L262.2 145.5L262.8 147.2L263.4 146.1L263.7 147.2L263.6 148.1L266.4 148.2L268.6 146.3L268.9 145.7L269.2 147.8L271.5 148.9L272.8 150.2L271.3 152.5L270.6 154.2L268.6 155.4L267.5 156.1L265.8 156.8L264.4 158.1L260.8 159.6L256.7 161.2L254.8 161.3L254.0 159.0L253.9 157.0L252.0 154.2L250.0 151.3L248.7 148.4L247.1 146.1L245.4 143.7L245.3 141.9L244.5 139.7L245.3 138.3L245.6 137.3L246.4 135.5L246.4 133.9L246.7 133.0L244.9 133.0L243.2 133.8L240.6 132.9L238.8 133.5L237.1 132.9L236.0 131.0L235.7 129.4L235.7 128.7L237.1 128.1L238.8 127.3L241.5 127.2L243.8 126.2L245.4 126.0L247.6 127.2L250.6 127.5L252.6 126.8L252.6 125.5L250.9 124.3L248.5 122.5L247.6 121.7L249.3 120.8L250.1 119.1L248.2 119.4L245.7 120.3L247.1 121.6L245.8 122.1L243.8 122.9L242.6 121.6L243.9 120.6L241.9 119.9L240.7 120.1L239.6 121.7L238.3 123.8L237.6 125.1L237.8 126.7L238.7 127.2L236.9 127.5L235.7 128.1L235.5 127.7L233.3 127.7L233.1 128.8L231.9 128.3L232.2 130.1L233.3 131.4L233.3 131.7L232.2 132.1L232.4 133.3L231.5 133.3L230.7 132.9L230.2 131.4L229.4 129.7L228.2 128.1L228.3 126.4L227.2 125.5L224.4 124.2L223.3 122.8L222.6 121.9L221.8 122.1L221.9 121.2L220.5 121.6L220.4 123.1L221.8 124.2L222.8 125.8L224.4 126.3L227.2 128.5L227.2 128.8L225.6 128.3L225.1 129.2L225.7 130.1L225.0 131.0L224.1 131.4L224.4 130.1L223.9 128.7L222.6 127.7L220.4 126.6L218.4 125.0L218.1 123.6L216.5 122.9L215.1 123.9L212.6 124.4L210.3 124.7L210.3 125.8L209.2 127.1L207.1 128.5L206.5 129.6L207.0 130.5L206.0 131.7L204.6 132.9L201.9 133.0Z" fill="#f08478" stroke="none"/><path d="M219.3 101.6L220.4 99.4L220.6 97.6L220.1 94.2L222.1 92.4L222.8 89.4L224.4 86.6L226.7 84.7L229.1 83.7L230.3 83.2L232.9 84.1L235.3 83.2L237.5 81.6L238.8 82.6L240.9 82.2L242.1 77.8L234.4 75.7L217.8 85.6L209.0 96.4L210.1 104.1L216.7 103.8L218.5 101.7Z" fill="#f5bd6b"/><path d="M219.3 101.6L220.4 99.4L220.6 97.6L220.1 94.2L222.1 92.4L222.8 89.4L224.4 86.6L226.7 84.7L229.1 83.7L229.7 83.6L232.9 85.8L232.7 88.4L233.4 89.7L231.9 91.5L228.9 96.4L228.6 99.3L228.9 102.2L225.6 108.0L220.6 107.9L219.2 106.2L218.7 102.2Z" fill="#86d698"/><path d="M229.7 83.6L230.3 83.2L232.9 84.1L235.3 83.2L237.5 81.6L238.8 82.6L238.7 83.7L238.1 83.9L239.9 86.2L238.8 87.7L240.0 89.9L239.6 91.5L240.4 92.6L241.5 94.9L239.7 97.6L237.5 98.9L234.4 100.1L231.1 100.6L229.2 98.9L229.2 94.7L231.9 91.5L233.4 89.7L232.7 88.4L232.9 85.8Z" fill="#86d698"/><path d="M215.1 107.9L216.3 107.9L217.3 108.0L218.4 108.2L219.2 103.0L215.1 103.0Z" fill="#f5bd6b"/><path d="M230.0 100.1L237.9 100.1L237.0 103.6L234.6 103.0L233.6 103.2L230.0 103.2Z" fill="#86d698"/><path d="M229.4 103.2L233.6 103.2L234.6 103.0L237.0 103.6L237.9 105.8L236.1 106.6L234.4 105.5L231.1 105.5L229.4 106.2Z" fill="#86d698"/><path d="M229.4 106.2L231.1 105.5L234.4 105.5L236.1 106.6L235.3 108.8L232.7 109.4L231.9 108.6L231.8 107.7L230.2 107.3L229.4 107.2Z" fill="#f5bd6b"/><path d="M222.5 108.5L227.2 107.7L228.4 108.5L231.9 108.6L232.7 109.4L233.2 111.2L232.8 113.0L233.4 114.4L231.8 116.3L227.8 116.0L227.5 115.8L223.3 113.7L223.0 112.2Z" fill="#86d698"/><path d="M214.0 109.2L216.3 107.9L217.3 108.0L218.4 108.2L218.9 108.3L222.5 108.5L223.0 112.2L223.3 113.7L220.3 114.7L222.0 116.8L221.1 118.7L218.4 118.8L217.4 118.7L215.2 118.5L215.8 116.6L213.9 115.8L213.5 114.0L213.4 112.5L214.5 111.6L214.7 110.3Z" fill="#86d698"/><path d="M209.6 113.5L211.4 115.1L213.2 115.7L213.9 115.8L213.5 114.0L213.4 112.5L214.5 111.6L214.7 110.3L214.0 109.2L210.1 109.2Z" fill="#86d698"/><path d="M204.8 124.4L207.6 125.2L210.3 125.6L211.2 125.8L215.2 124.8L215.1 123.8L214.5 123.2L214.3 121.9L214.5 120.9L213.5 120.5L214.4 119.0L215.2 118.5L215.8 116.6L213.9 115.8L213.2 115.7L211.4 115.1L209.6 113.5L207.9 112.2L200.2 116.6L203.5 121.4Z" fill="#f5bd6b"/><path d="M204.8 124.4L207.6 125.2L210.3 125.6L212.3 128.8L206.8 134.5L200.2 134.5L198.6 132.4L198.5 131.4L199.1 130.1L199.1 129.2L199.2 127.5L200.0 126.7L199.5 126.2L197.8 126.2L197.0 126.3L194.7 122.8L204.6 122.8Z" fill="#f5bd6b"/><path d="M197.0 126.3L197.8 126.2L199.5 126.2L200.0 126.7L199.2 127.5L199.1 129.2L199.1 130.1L198.5 131.4L198.6 132.4L198.0 133.9L194.7 132.6L194.7 126.2Z" fill="#f08478"/><path d="M215.1 123.8L214.5 123.2L214.3 121.9L214.5 120.9L216.7 121.0L218.3 119.9L220.3 119.4L221.9 120.1L221.9 121.3L221.4 121.9L222.8 123.8L225.0 125.5L227.5 127.5L228.1 128.8L227.8 130.1L226.7 132.6L220.0 132.6L215.6 130.1L215.6 124.8Z" fill="#86d698"/><path d="M213.5 120.5L214.5 120.9L216.7 121.0L218.3 119.9L217.4 118.7L215.2 118.5L214.4 119.0Z" fill="#f08478"/><path d="M217.4 118.7L218.3 119.9L220.3 119.4L221.9 120.1L224.4 119.7L225.6 118.0L223.3 116.6L222.0 116.8L221.1 118.7L218.4 118.8Z" fill="#86d698"/><path d="M220.3 114.7L223.3 113.7L227.5 115.8L225.6 117.1L223.3 116.6L222.0 116.8Z" fill="#86d698"/><path d="M225.6 118.0L225.6 117.1L227.5 115.8L227.8 116.0L231.6 116.4L231.3 117.4L228.9 117.7L227.5 118.3Z" fill="#f5bd6b"/><path d="M224.4 119.7L225.6 118.0L227.5 118.3L228.9 117.7L231.3 117.4L232.1 118.0L230.0 120.5L227.5 120.9L225.0 120.2Z" fill="#86d698"/><path d="M221.9 121.3L221.9 120.1L224.4 119.7L225.0 120.2L227.5 120.9L230.0 120.5L230.5 121.9L231.6 122.8L231.8 124.6L231.5 125.8L232.2 127.1L231.9 127.3L230.0 127.7L229.7 128.8L229.1 129.3L227.8 129.4L227.8 127.5L221.1 122.7Z" fill="#86d698"/><path d="M230.0 120.5L232.1 118.0L233.8 118.1L236.1 117.7L237.9 120.1L237.9 121.6L239.7 121.6L239.9 123.5L238.3 123.9L236.6 123.4L231.8 123.8L231.6 122.8L230.5 121.9Z" fill="#f5bd6b"/><path d="M236.1 117.7L237.7 117.4L239.0 118.3L240.0 120.2L237.9 121.6L237.9 120.1Z" fill="#86d698"/><path d="M231.8 123.8L236.6 123.4L238.3 123.9L238.8 126.2L235.8 126.6L234.7 127.2L232.2 127.1L231.5 125.8L231.8 124.6Z" fill="#f08478"/><path d="M229.1 129.3L229.7 128.8L230.0 127.7L231.9 127.3L232.2 127.1L234.7 127.2L235.8 126.6L235.9 127.9L235.5 128.5L234.4 133.9L228.9 133.9L228.3 129.7Z" fill="#f5bd6b"/><path d="M231.3 117.4L231.6 116.4L231.8 116.3L233.4 114.4L232.8 113.0L234.9 112.4L240.4 113.1L242.1 111.8L244.6 112.5L246.0 114.6L248.7 115.3L251.0 115.7L250.7 118.0L249.0 119.1L248.2 119.9L247.1 121.9L247.3 122.5L243.2 123.8L239.7 121.6L237.9 121.6L240.0 120.2L239.0 118.3L237.7 117.4L236.1 117.7L233.8 118.1L232.1 118.0Z" fill="#f5bd6b"/><path d="M232.7 109.4L235.3 108.8L236.1 106.6L237.9 105.8L240.9 106.8L240.8 108.0L242.9 110.1L241.5 112.1L240.4 113.1L234.9 112.4L232.8 113.0L233.2 111.2Z" fill="#f08478"/><path d="M235.5 125.9L237.9 126.2L237.8 127.2L253.1 126.2L252.6 126.8L254.8 127.3L255.0 128.7L256.2 129.2L255.7 130.9L256.2 132.4L253.6 132.5L249.3 132.9L247.3 133.0L246.7 134.0L246.3 134.2L235.5 134.2Z" fill="#f5bd6b"/><path d="M250.9 124.0L253.7 124.6L255.9 125.2L258.1 126.4L258.0 127.3L256.4 127.1L254.8 127.3L252.6 126.8L252.5 125.5Z" fill="#f5bd6b"/><path d="M254.8 127.3L256.4 127.1L257.1 127.7L258.1 129.4L257.8 130.2L256.2 129.2L255.0 128.7Z" fill="#f08478"/><path d="M256.4 127.1L258.0 127.3L258.1 126.4L260.3 126.3L262.5 128.3L260.8 130.9L259.7 130.3L260.1 129.6L258.1 130.2L258.1 129.4L257.1 127.7Z" fill="#86d698"/><path d="M246.2 134.0L246.7 134.0L247.3 133.0L249.3 132.9L253.6 132.5L252.2 135.5L249.6 137.1L247.4 138.5L246.2 138.0L246.3 137.1L247.1 136.2L246.4 135.5Z" fill="#f08478"/><path d="M245.5 137.5L246.3 137.1L247.1 136.2L246.4 135.5L246.0 135.8Z" fill="#cccccc"/><path d="M244.5 139.7L245.3 141.9L245.8 140.1L246.1 138.0L246.2 138.0L246.3 137.1L245.5 137.5L244.6 138.5Z" fill="#cccccc"/><path d="M245.3 142.0L246.5 142.3L248.2 141.3L247.6 139.5L249.8 138.7L250.0 138.4L249.6 137.1L247.4 138.5L246.2 138.0L246.1 138.0L245.8 140.1Z" fill="#f5bd6b"/><path d="M249.6 137.1L252.2 135.5L253.6 132.5L256.2 132.4L257.3 134.2L256.9 136.4L259.4 138.9L259.6 140.2L260.4 141.4L259.2 141.9L258.1 142.4L256.1 142.3L253.1 140.0L250.0 138.4L249.8 138.7Z" fill="#f5bd6b"/><path d="M256.2 129.2L257.8 130.2L258.1 130.2L260.1 129.6L259.7 130.3L260.8 130.9L261.4 132.3L264.2 133.4L266.4 133.0L266.4 132.3L268.0 131.2L269.9 131.0L272.2 132.0L274.3 133.1L273.5 136.4L273.9 139.5L275.0 140.1L274.1 141.5L276.6 144.6L274.7 147.2L270.8 147.8L269.1 146.1L266.4 146.7L261.9 143.1L260.4 141.4L259.6 140.2L259.4 138.9L256.9 136.4L257.3 134.2L256.2 132.4L255.7 130.9Z" fill="#f5bd6b"/><path d="M245.3 142.0L246.5 142.3L248.2 141.3L247.6 139.5L249.8 138.7L250.0 138.4L253.1 140.0L256.1 142.3L258.1 142.4L259.2 141.9L260.2 143.1L260.8 143.0L263.1 145.5L262.9 147.6L263.7 148.2L264.8 149.7L267.7 149.9L268.2 150.7L267.5 153.0L264.2 154.2L260.8 154.6L260.0 155.1L258.6 156.6L255.3 156.0L254.6 155.9L254.0 157.1L252.0 157.6L246.5 150.7L243.2 143.7Z" fill="#86d698"/><path d="M258.1 142.4L259.2 141.9L260.4 141.4L260.6 142.5L260.2 143.1L259.2 142.5Z" fill="#cccccc"/><path d="M263.7 148.2L264.8 149.7L267.7 149.9L268.2 148.4L268.9 147.4L269.2 145.8L268.0 145.7L266.4 147.8L264.2 147.8Z" fill="#86d698"/><path d="M262.8 147.6L263.3 147.8L264.2 146.7L263.6 145.5L262.7 146.3Z" fill="#cccccc"/><path d="M267.7 149.9L268.2 148.4L268.9 147.4L269.7 147.8L273.5 149.6L273.0 153.0L267.5 157.6L265.4 156.9L264.2 154.2L267.5 153.0L268.2 150.7Z" fill="#f08478"/><path d="M254.0 157.1L254.6 155.9L255.3 156.0L258.6 156.6L260.0 155.1L260.8 154.6L264.2 154.2L265.4 156.9L264.2 159.3L256.4 162.3L253.7 161.5L252.6 157.6Z" fill="#f08478"/><path d="M258.1 117.4L259.0 114.7L260.6 115.1L262.8 112.7L266.9 113.7L271.4 113.7L274.6 113.7L274.1 109.4L278.5 108.6L282.0 107.7L285.1 108.9L287.9 109.2L291.5 108.6L295.0 113.7L298.9 113.7L303.1 116.3L301.1 119.2L298.3 119.1L297.6 121.4L295.3 122.1L295.4 125.1L293.9 125.1L290.4 125.0L288.4 124.6L285.1 125.4L282.9 127.0L281.8 127.6L280.3 127.2L279.6 124.8L274.3 123.1L271.3 121.4L268.6 122.1L268.6 127.1L267.2 126.2L264.6 126.4L264.2 124.8L261.9 122.8L263.1 120.8L265.6 119.5L261.1 120.1L260.3 119.9Z" fill="#f08478"/><path d="M268.6 122.1L271.3 121.4L274.3 123.1L279.6 124.8L280.3 127.2L281.8 127.6L282.9 127.0L285.1 125.8L284.5 127.5L287.3 127.9L285.8 128.5L284.7 128.4L284.5 129.3L282.4 129.4L281.6 132.4L280.1 132.1L277.9 130.2L275.5 128.3L273.1 127.0L274.4 127.1L273.0 125.9L271.3 125.2L270.1 125.9L268.6 127.1Z" fill="#f5bd6b"/><path d="M264.6 126.4L267.2 126.2L268.6 127.1L270.1 125.9L271.3 125.2L273.0 125.9L274.4 127.1L273.1 127.0L275.5 128.3L277.9 130.2L280.1 132.1L278.3 132.5L276.3 134.7L274.3 134.4L274.3 133.1L272.2 132.0L269.9 131.0L268.0 131.2L266.4 132.3L266.3 132.8L264.7 130.1L265.8 128.1L264.7 127.7Z" fill="#cccccc"/><path d="M285.1 125.4L288.4 124.6L290.4 125.0L293.9 125.1L295.4 126.2L293.3 127.5L291.0 128.3L288.2 129.3L288.0 129.6L283.2 129.4L283.5 128.7L284.7 128.4L285.8 128.5L287.3 127.9L284.5 127.5L285.1 125.8Z" fill="#86d698"/><path d="M281.6 132.4L282.4 129.4L283.2 129.4L288.0 129.6L288.2 130.7L289.5 132.1L287.6 132.4L285.8 133.0L285.6 131.4L284.0 131.4L283.5 132.5Z" fill="#cccccc"/><path d="M273.5 136.4L274.3 134.4L276.3 134.7L278.3 132.5L280.1 132.1L281.6 132.4L283.5 132.5L284.0 131.4L285.6 131.4L285.8 133.0L287.6 132.4L289.5 132.1L289.1 132.8L285.8 133.7L285.3 136.0L284.0 137.4L283.5 138.9L280.0 140.1L279.9 141.4L275.7 142.0L274.0 141.5L275.0 140.1L273.9 139.5Z" fill="#f08478"/><path d="M274.1 141.5L275.7 142.0L279.9 141.4L280.0 140.1L283.5 138.9L284.0 137.4L285.3 136.0L285.8 133.7L289.1 132.8L290.6 133.3L292.6 134.5L291.5 135.7L288.4 135.5L288.8 137.6L289.9 138.5L289.0 140.1L287.3 141.9L284.3 143.8L284.0 145.5L285.1 147.9L282.0 148.9L279.6 149.6L274.7 147.8L276.6 144.6Z" fill="#f5bd6b"/><path d="M282.0 148.9L285.1 147.9L284.0 145.5L284.3 143.8L287.3 141.9L289.0 140.1L289.9 138.5L288.8 137.6L288.4 135.5L291.5 135.7L292.6 134.5L293.9 136.0L293.6 139.5L295.3 140.7L296.1 141.1L295.2 142.7L297.2 143.8L299.5 144.4L301.7 145.4L303.9 145.6L304.0 143.8L304.7 144.5L305.8 145.2L308.3 145.1L308.3 143.9L310.5 142.3L312.7 142.0L314.1 143.5L312.9 144.5L311.8 146.0L310.7 148.4L309.7 148.3L309.6 150.5L308.9 150.9L308.6 148.9L307.4 148.4L308.5 147.2L305.8 146.9L305.8 146.1L304.3 145.6L304.0 147.8L304.7 149.2L305.0 151.3L301.7 155.3L296.1 168.8L289.5 168.8L280.7 153.0Z" fill="#86d698"/><path d="M295.2 142.7L296.1 141.1L297.8 141.1L300.0 142.6L301.7 143.7L304.0 143.8L303.9 145.6L301.7 145.4L299.5 144.4L297.2 143.8Z" fill="#f5bd6b"/><path d="M304.7 144.5L305.5 143.5L307.7 143.7L308.3 145.1L305.8 145.2Z" fill="#cccccc"/><path d="M304.0 147.8L304.3 145.6L305.8 146.1L305.8 146.9L308.5 147.2L307.4 148.4L308.6 148.9L308.9 150.9L308.7 152.5L307.2 151.9L305.0 151.6L304.7 149.2Z" fill="#f5bd6b"/><path d="M308.7 152.5L308.9 150.9L309.6 150.5L309.7 148.3L310.7 148.4L311.8 146.0L312.9 144.5L314.1 143.5L315.4 144.2L315.7 146.3L314.5 147.8L315.9 148.4L316.3 150.6L318.4 151.2L317.2 152.7L315.8 153.4L314.6 154.8L315.9 157.1L315.1 158.7L316.2 160.8L316.7 162.3L315.8 164.3L312.7 165.4L309.4 158.7L307.7 153.0Z" fill="#f5bd6b"/><path d="M314.6 154.8L315.8 153.4L317.2 152.7L317.7 153.6L318.4 153.6L318.3 155.9L319.4 155.1L321.5 155.0L322.4 157.0L323.3 157.9L323.2 159.4L320.4 159.5L319.7 160.3L320.3 162.4L319.3 162.7L317.7 162.1L317.4 165.4L318.8 167.7L319.5 168.6L319.1 169.0L318.3 169.1L317.3 168.2L316.0 168.2L314.3 166.6L315.8 164.3L316.7 162.3L316.2 160.8L315.1 158.7L315.9 157.1Z" fill="#f5bd6b"/><path d="M317.2 152.7L318.4 151.2L319.1 150.3L319.9 151.1L320.6 152.1L322.2 152.4L321.5 153.7L322.8 154.6L324.5 156.6L325.5 158.5L325.4 159.2L323.7 159.5L323.2 159.4L323.3 157.9L322.4 157.0L321.5 155.0L319.4 155.1L318.3 155.9L318.4 153.6L317.7 153.6Z" fill="#cccccc"/><path d="M319.5 150.3L321.0 149.8L322.9 149.2L324.5 149.8L325.9 151.3L326.5 151.9L324.8 154.2L325.9 157.0L328.1 159.9L328.1 163.8L324.3 166.6L322.1 166.2L322.0 163.9L322.7 163.3L323.7 162.4L325.4 161.8L325.4 159.2L325.5 158.5L324.5 156.6L322.8 154.6L321.5 153.7L322.2 152.4L320.6 152.1L319.9 151.1Z" fill="#86d698"/><path d="M319.7 160.3L320.4 159.5L323.2 159.4L323.7 159.5L325.4 159.2L325.4 161.8L323.7 162.4L322.7 163.3L322.0 163.9L321.0 164.3L320.3 162.4Z" fill="#86d698"/><path d="M317.3 168.2L318.3 169.1L319.1 169.0L319.5 168.6L321.5 168.8L322.6 174.3L321.0 174.3L317.1 172.1Z" fill="#f5bd6b"/><path d="M303.6 116.3L307.2 114.4L311.6 115.1L314.9 112.1L319.5 113.2L319.6 114.3L324.8 115.1L329.2 116.0L333.1 114.7L335.5 115.4L334.2 117.7L336.4 118.3L338.9 119.8L334.7 121.2L330.3 122.1L329.8 123.9L322.6 126.4L317.1 125.2L313.2 125.1L312.1 123.2L307.2 121.9L306.8 119.4Z" fill="#cccccc"/><path d="M343.9 128.8L345.8 126.6L348.2 127.0L349.9 125.5L351.0 125.8L351.3 127.5L348.5 130.6L346.9 131.0L344.7 131.7L343.6 130.1Z" fill="#cccccc"/><path d="M344.7 131.7L346.9 131.0L348.5 130.6L350.7 132.6L350.2 136.4L345.2 136.4Z" fill="#f5bd6b"/><path d="M288.2 129.3L291.0 128.3L293.3 127.5L295.4 126.2L295.4 125.1L295.3 122.1L297.6 121.4L298.3 119.1L301.1 119.2L303.1 116.3L303.6 116.3L306.8 119.4L307.2 121.9L312.1 123.2L313.2 125.1L317.1 125.2L322.6 126.4L329.8 123.9L330.3 122.1L334.7 121.2L338.9 119.8L336.4 118.3L334.2 117.7L335.5 115.4L336.7 115.8L338.3 114.8L340.0 111.9L339.4 111.0L340.3 110.3L343.0 110.0L345.8 111.0L347.4 114.7L347.5 115.6L351.1 116.8L351.3 118.4L353.5 117.8L355.4 117.6L354.6 119.0L353.5 122.0L351.6 122.3L351.3 124.8L350.9 125.5L349.9 125.5L348.2 127.0L345.8 126.6L343.9 128.8L342.5 132.6L343.6 137.6L342.5 142.5L339.2 149.6L331.4 153.0L327.6 153.3L325.9 151.3L324.5 149.8L322.9 149.2L321.0 149.8L319.5 150.3L319.1 150.3L318.4 151.2L316.3 150.6L315.9 148.4L314.5 147.8L315.7 146.3L315.4 144.2L314.1 143.5L312.7 142.0L310.5 142.3L308.3 143.9L307.7 143.7L305.5 143.5L304.7 144.5L304.0 143.8L301.7 143.7L300.0 142.6L297.8 141.1L296.1 141.1L295.3 140.7L293.6 139.5L293.9 136.0L292.6 134.5L290.6 133.3L289.1 132.8L289.5 132.1L288.2 130.7L288.0 129.6Z" fill="#f08478"/><path d="M260.8 120.1L263.6 119.4L265.3 120.1L265.3 122.1L263.1 122.8L262.3 123.1L263.1 124.8L264.7 125.5L264.9 127.5L266.4 128.1L265.3 130.1L266.1 132.6L264.2 133.0L261.9 132.1L260.8 130.7L261.4 128.4L260.3 126.4L259.2 124.8L258.6 122.8L258.6 121.4Z" fill="#fff" stroke="none"/></g><g transform="translate(-397.1 0)"><g clip-path="url(#cEURASIA)"><path d="M200.6 133.9L199.9 133.1L198.6 132.4L197.0 132.6L197.1 130.7L196.3 130.3L197.1 127.5L196.7 124.8L198.0 123.9L201.8 124.3L204.8 124.3L205.5 122.7L205.6 120.8L204.4 119.1L201.6 118.0L201.6 117.4L205.0 117.0L204.8 115.6L207.0 115.8L208.6 114.0L210.7 113.1L211.5 111.9L212.1 110.7L214.5 110.0L216.3 109.4L215.8 106.9L215.8 104.6L218.4 103.5L218.2 105.4L217.8 107.7L218.8 109.2L220.0 108.9L222.5 109.2L225.0 108.5L227.2 108.2L228.3 108.6L230.0 107.4L230.0 104.6L231.1 103.5L233.3 104.3L233.6 102.5L232.7 101.1L237.7 100.6L240.1 99.8L238.2 98.8L234.4 99.4L232.1 99.9L230.3 98.1L230.3 94.7L234.4 91.2L234.7 90.1L231.1 89.9L230.3 92.1L226.1 95.9L225.8 98.6L227.5 100.1L225.2 103.8L224.4 105.8L222.6 106.9L221.0 106.9L220.6 105.4L219.3 102.2L218.6 101.1L215.6 102.8L214.5 103.0L212.9 101.4L212.3 98.1L212.5 96.1L216.2 93.7L218.9 91.5L221.1 88.4L223.3 85.1L226.7 82.6L230.0 81.4L235.1 79.6L237.7 79.8L241.0 81.2L243.2 82.8L246.5 83.3L252.0 86.0L252.4 88.4L248.7 89.0L244.3 88.1L243.2 88.4L244.9 91.2L245.4 92.4L248.2 93.3L248.7 92.1L251.5 91.9L250.9 89.4L254.8 89.0L255.3 84.7L257.5 85.3L258.1 87.9L259.7 86.4L265.3 84.3L269.7 84.5L273.0 83.7L274.1 82.2L278.5 83.3L280.7 84.1L282.4 85.3L280.7 81.8L280.7 78.8L282.9 75.7L286.8 75.7L287.3 78.8L286.8 83.7L287.9 85.6L286.2 88.4L288.4 86.6L289.5 83.7L288.4 79.8L290.1 77.1L292.8 76.7L295.6 74.6L297.2 77.8L298.3 80.8L299.5 77.8L301.7 74.0L306.1 70.7L311.6 69.1L317.1 68.0L321.8 65.2L324.8 66.8L330.3 68.0L332.0 71.4L328.1 73.5L331.4 74.2L338.1 75.7L342.5 74.6L346.9 74.6L349.6 78.8L351.3 79.8L353.5 78.8L357.9 79.2L361.2 76.7L367.8 77.1L372.2 78.8L374.5 80.0L380.0 79.8L383.3 81.8L385.5 82.6L391.0 82.4L394.9 81.8L395.4 83.7L400.9 82.2L405.3 84.1L408.6 85.3L413.1 87.5L416.6 89.4L414.2 92.1L410.9 91.5L407.5 90.3L405.3 91.2L403.1 92.1L402.6 95.6L398.7 96.8L394.9 99.8L389.9 99.8L387.7 100.1L386.6 103.3L386.4 105.8L385.3 108.0L383.3 110.4L381.6 111.0L379.6 113.7L378.6 110.7L378.5 105.4L380.0 103.3L383.3 98.9L386.6 95.6L383.3 96.8L380.0 97.3L377.2 100.6L374.5 101.4L370.6 100.6L364.5 100.9L361.2 103.8L359.0 105.4L356.3 108.2L358.5 109.2L360.7 108.9L362.3 110.7L361.8 113.7L361.8 117.3L359.6 120.1L356.8 122.8L353.5 125.1L351.3 125.5L351.0 125.8L349.9 127.5L347.4 129.0L348.4 130.6L349.5 132.6L349.5 134.5L349.1 135.2L347.4 135.5L346.1 135.8L346.3 133.9L346.6 131.7L344.7 131.4L345.0 129.4L343.9 128.8L341.4 130.1L340.6 130.3L340.8 127.7L338.1 129.8L336.7 130.1L338.1 132.0L340.0 131.6L341.9 132.4L339.5 133.9L338.4 135.2L339.7 137.0L341.1 139.1L341.1 140.3L340.8 141.9L340.3 143.7L338.9 146.1L337.5 147.6L335.9 149.0L332.9 150.2L329.8 151.3L328.1 151.6L328.5 152.7L327.6 151.3L325.9 151.2L324.5 152.4L323.5 154.2L324.3 155.9L326.3 157.6L327.4 160.4L327.2 162.7L325.0 163.9L324.5 164.8L322.6 165.9L322.5 164.3L321.0 163.7L320.3 162.4L319.3 161.5L318.1 160.5L317.1 160.6L316.9 162.7L316.2 165.1L317.4 166.2L317.7 167.7L319.1 168.2L319.5 168.6L320.9 170.4L321.0 172.3L321.7 173.9L321.0 174.0L318.5 172.2L317.7 170.4L317.4 168.4L316.5 167.7L315.2 166.6L315.4 164.3L315.7 162.1L315.1 159.9L314.6 157.3L313.6 156.7L311.9 157.8L310.8 157.4L311.0 155.3L309.9 153.3L308.6 152.2L308.1 150.4L306.6 150.4L305.0 151.0L302.8 151.3L302.2 152.8L300.6 153.6L297.6 156.8L295.4 158.2L295.4 160.8L294.8 164.0L293.9 165.1L293.1 165.6L292.3 166.4L291.0 164.6L289.5 161.5L288.4 158.7L287.3 155.9L287.1 154.2L287.0 151.9L286.4 151.7L284.6 152.1L282.9 150.4L282.4 149.0L281.3 148.4L280.4 147.2L277.4 146.9L274.7 147.0L271.3 146.5L269.9 145.1L268.9 144.6L266.9 145.4L264.7 144.3L262.8 142.5L261.9 141.1L260.6 140.9L259.7 141.9L260.6 143.7L262.2 145.5L262.8 147.2L263.4 146.1L263.7 147.2L263.6 148.1L266.4 148.2L268.6 146.3L268.9 145.7L269.2 147.8L271.5 148.9L272.8 150.2L271.3 152.5L270.6 154.2L268.6 155.4L267.5 156.1L265.8 156.8L264.4 158.1L260.8 159.6L256.7 161.2L254.8 161.3L254.0 159.0L253.9 157.0L252.0 154.2L250.0 151.3L248.7 148.4L247.1 146.1L245.4 143.7L245.3 141.9L244.5 139.7L245.3 138.3L245.6 137.3L246.4 135.5L246.4 133.9L246.7 133.0L244.9 133.0L243.2 133.8L240.6 132.9L238.8 133.5L237.1 132.9L236.0 131.0L235.7 129.4L235.7 128.7L237.1 128.1L238.8 127.3L241.5 127.2L243.8 126.2L245.4 126.0L247.6 127.2L250.6 127.5L252.6 126.8L252.6 125.5L250.9 124.3L248.5 122.5L247.6 121.7L249.3 120.8L250.1 119.1L248.2 119.4L245.7 120.3L247.1 121.6L245.8 122.1L243.8 122.9L242.6 121.6L243.9 120.6L241.9 119.9L240.7 120.1L239.6 121.7L238.3 123.8L237.6 125.1L237.8 126.7L238.7 127.2L236.9 127.5L235.7 128.1L235.5 127.7L233.3 127.7L233.1 128.8L231.9 128.3L232.2 130.1L233.3 131.4L233.3 131.7L232.2 132.1L232.4 133.3L231.5 133.3L230.7 132.9L230.2 131.4L229.4 129.7L228.2 128.1L228.3 126.4L227.2 125.5L224.4 124.2L223.3 122.8L222.6 121.9L221.8 122.1L221.9 121.2L220.5 121.6L220.4 123.1L221.8 124.2L222.8 125.8L224.4 126.3L227.2 128.5L227.2 128.8L225.6 128.3L225.1 129.2L225.7 130.1L225.0 131.0L224.1 131.4L224.4 130.1L223.9 128.7L222.6 127.7L220.4 126.6L218.4 125.0L218.1 123.6L216.5 122.9L215.1 123.9L212.6 124.4L210.3 124.7L210.3 125.8L209.2 127.1L207.1 128.5L206.5 129.6L207.0 130.5L206.0 131.7L204.6 132.9L201.9 133.0Z" fill="#f08478" stroke="none"/><path d="M219.3 101.6L220.4 99.4L220.6 97.6L220.1 94.2L222.1 92.4L222.8 89.4L224.4 86.6L226.7 84.7L229.1 83.7L230.3 83.2L232.9 84.1L235.3 83.2L237.5 81.6L238.8 82.6L240.9 82.2L242.1 77.8L234.4 75.7L217.8 85.6L209.0 96.4L210.1 104.1L216.7 103.8L218.5 101.7Z" fill="#f5bd6b"/><path d="M219.3 101.6L220.4 99.4L220.6 97.6L220.1 94.2L222.1 92.4L222.8 89.4L224.4 86.6L226.7 84.7L229.1 83.7L229.7 83.6L232.9 85.8L232.7 88.4L233.4 89.7L231.9 91.5L228.9 96.4L228.6 99.3L228.9 102.2L225.6 108.0L220.6 107.9L219.2 106.2L218.7 102.2Z" fill="#86d698"/><path d="M229.7 83.6L230.3 83.2L232.9 84.1L235.3 83.2L237.5 81.6L238.8 82.6L238.7 83.7L238.1 83.9L239.9 86.2L238.8 87.7L240.0 89.9L239.6 91.5L240.4 92.6L241.5 94.9L239.7 97.6L237.5 98.9L234.4 100.1L231.1 100.6L229.2 98.9L229.2 94.7L231.9 91.5L233.4 89.7L232.7 88.4L232.9 85.8Z" fill="#86d698"/><path d="M215.1 107.9L216.3 107.9L217.3 108.0L218.4 108.2L219.2 103.0L215.1 103.0Z" fill="#f5bd6b"/><path d="M230.0 100.1L237.9 100.1L237.0 103.6L234.6 103.0L233.6 103.2L230.0 103.2Z" fill="#86d698"/><path d="M229.4 103.2L233.6 103.2L234.6 103.0L237.0 103.6L237.9 105.8L236.1 106.6L234.4 105.5L231.1 105.5L229.4 106.2Z" fill="#86d698"/><path d="M229.4 106.2L231.1 105.5L234.4 105.5L236.1 106.6L235.3 108.8L232.7 109.4L231.9 108.6L231.8 107.7L230.2 107.3L229.4 107.2Z" fill="#f5bd6b"/><path d="M222.5 108.5L227.2 107.7L228.4 108.5L231.9 108.6L232.7 109.4L233.2 111.2L232.8 113.0L233.4 114.4L231.8 116.3L227.8 116.0L227.5 115.8L223.3 113.7L223.0 112.2Z" fill="#86d698"/><path d="M214.0 109.2L216.3 107.9L217.3 108.0L218.4 108.2L218.9 108.3L222.5 108.5L223.0 112.2L223.3 113.7L220.3 114.7L222.0 116.8L221.1 118.7L218.4 118.8L217.4 118.7L215.2 118.5L215.8 116.6L213.9 115.8L213.5 114.0L213.4 112.5L214.5 111.6L214.7 110.3Z" fill="#86d698"/><path d="M209.6 113.5L211.4 115.1L213.2 115.7L213.9 115.8L213.5 114.0L213.4 112.5L214.5 111.6L214.7 110.3L214.0 109.2L210.1 109.2Z" fill="#86d698"/><path d="M204.8 124.4L207.6 125.2L210.3 125.6L211.2 125.8L215.2 124.8L215.1 123.8L214.5 123.2L214.3 121.9L214.5 120.9L213.5 120.5L214.4 119.0L215.2 118.5L215.8 116.6L213.9 115.8L213.2 115.7L211.4 115.1L209.6 113.5L207.9 112.2L200.2 116.6L203.5 121.4Z" fill="#f5bd6b"/><path d="M204.8 124.4L207.6 125.2L210.3 125.6L212.3 128.8L206.8 134.5L200.2 134.5L198.6 132.4L198.5 131.4L199.1 130.1L199.1 129.2L199.2 127.5L200.0 126.7L199.5 126.2L197.8 126.2L197.0 126.3L194.7 122.8L204.6 122.8Z" fill="#f5bd6b"/><path d="M197.0 126.3L197.8 126.2L199.5 126.2L200.0 126.7L199.2 127.5L199.1 129.2L199.1 130.1L198.5 131.4L198.6 132.4L198.0 133.9L194.7 132.6L194.7 126.2Z" fill="#f08478"/><path d="M215.1 123.8L214.5 123.2L214.3 121.9L214.5 120.9L216.7 121.0L218.3 119.9L220.3 119.4L221.9 120.1L221.9 121.3L221.4 121.9L222.8 123.8L225.0 125.5L227.5 127.5L228.1 128.8L227.8 130.1L226.7 132.6L220.0 132.6L215.6 130.1L215.6 124.8Z" fill="#86d698"/><path d="M213.5 120.5L214.5 120.9L216.7 121.0L218.3 119.9L217.4 118.7L215.2 118.5L214.4 119.0Z" fill="#f08478"/><path d="M217.4 118.7L218.3 119.9L220.3 119.4L221.9 120.1L224.4 119.7L225.6 118.0L223.3 116.6L222.0 116.8L221.1 118.7L218.4 118.8Z" fill="#86d698"/><path d="M220.3 114.7L223.3 113.7L227.5 115.8L225.6 117.1L223.3 116.6L222.0 116.8Z" fill="#86d698"/><path d="M225.6 118.0L225.6 117.1L227.5 115.8L227.8 116.0L231.6 116.4L231.3 117.4L228.9 117.7L227.5 118.3Z" fill="#f5bd6b"/><path d="M224.4 119.7L225.6 118.0L227.5 118.3L228.9 117.7L231.3 117.4L232.1 118.0L230.0 120.5L227.5 120.9L225.0 120.2Z" fill="#86d698"/><path d="M221.9 121.3L221.9 120.1L224.4 119.7L225.0 120.2L227.5 120.9L230.0 120.5L230.5 121.9L231.6 122.8L231.8 124.6L231.5 125.8L232.2 127.1L231.9 127.3L230.0 127.7L229.7 128.8L229.1 129.3L227.8 129.4L227.8 127.5L221.1 122.7Z" fill="#86d698"/><path d="M230.0 120.5L232.1 118.0L233.8 118.1L236.1 117.7L237.9 120.1L237.9 121.6L239.7 121.6L239.9 123.5L238.3 123.9L236.6 123.4L231.8 123.8L231.6 122.8L230.5 121.9Z" fill="#f5bd6b"/><path d="M236.1 117.7L237.7 117.4L239.0 118.3L240.0 120.2L237.9 121.6L237.9 120.1Z" fill="#86d698"/><path d="M231.8 123.8L236.6 123.4L238.3 123.9L238.8 126.2L235.8 126.6L234.7 127.2L232.2 127.1L231.5 125.8L231.8 124.6Z" fill="#f08478"/><path d="M229.1 129.3L229.7 128.8L230.0 127.7L231.9 127.3L232.2 127.1L234.7 127.2L235.8 126.6L235.9 127.9L235.5 128.5L234.4 133.9L228.9 133.9L228.3 129.7Z" fill="#f5bd6b"/><path d="M231.3 117.4L231.6 116.4L231.8 116.3L233.4 114.4L232.8 113.0L234.9 112.4L240.4 113.1L242.1 111.8L244.6 112.5L246.0 114.6L248.7 115.3L251.0 115.7L250.7 118.0L249.0 119.1L248.2 119.9L247.1 121.9L247.3 122.5L243.2 123.8L239.7 121.6L237.9 121.6L240.0 120.2L239.0 118.3L237.7 117.4L236.1 117.7L233.8 118.1L232.1 118.0Z" fill="#f5bd6b"/><path d="M232.7 109.4L235.3 108.8L236.1 106.6L237.9 105.8L240.9 106.8L240.8 108.0L242.9 110.1L241.5 112.1L240.4 113.1L234.9 112.4L232.8 113.0L233.2 111.2Z" fill="#f08478"/><path d="M235.5 125.9L237.9 126.2L237.8 127.2L253.1 126.2L252.6 126.8L254.8 127.3L255.0 128.7L256.2 129.2L255.7 130.9L256.2 132.4L253.6 132.5L249.3 132.9L247.3 133.0L246.7 134.0L246.3 134.2L235.5 134.2Z" fill="#f5bd6b"/><path d="M250.9 124.0L253.7 124.6L255.9 125.2L258.1 126.4L258.0 127.3L256.4 127.1L254.8 127.3L252.6 126.8L252.5 125.5Z" fill="#f5bd6b"/><path d="M254.8 127.3L256.4 127.1L257.1 127.7L258.1 129.4L257.8 130.2L256.2 129.2L255.0 128.7Z" fill="#f08478"/><path d="M256.4 127.1L258.0 127.3L258.1 126.4L260.3 126.3L262.5 128.3L260.8 130.9L259.7 130.3L260.1 129.6L258.1 130.2L258.1 129.4L257.1 127.7Z" fill="#86d698"/><path d="M246.2 134.0L246.7 134.0L247.3 133.0L249.3 132.9L253.6 132.5L252.2 135.5L249.6 137.1L247.4 138.5L246.2 138.0L246.3 137.1L247.1 136.2L246.4 135.5Z" fill="#f08478"/><path d="M245.5 137.5L246.3 137.1L247.1 136.2L246.4 135.5L246.0 135.8Z" fill="#cccccc"/><path d="M244.5 139.7L245.3 141.9L245.8 140.1L246.1 138.0L246.2 138.0L246.3 137.1L245.5 137.5L244.6 138.5Z" fill="#cccccc"/><path d="M245.3 142.0L246.5 142.3L248.2 141.3L247.6 139.5L249.8 138.7L250.0 138.4L249.6 137.1L247.4 138.5L246.2 138.0L246.1 138.0L245.8 140.1Z" fill="#f5bd6b"/><path d="M249.6 137.1L252.2 135.5L253.6 132.5L256.2 132.4L257.3 134.2L256.9 136.4L259.4 138.9L259.6 140.2L260.4 141.4L259.2 141.9L258.1 142.4L256.1 142.3L253.1 140.0L250.0 138.4L249.8 138.7Z" fill="#f5bd6b"/><path d="M256.2 129.2L257.8 130.2L258.1 130.2L260.1 129.6L259.7 130.3L260.8 130.9L261.4 132.3L264.2 133.4L266.4 133.0L266.4 132.3L268.0 131.2L269.9 131.0L272.2 132.0L274.3 133.1L273.5 136.4L273.9 139.5L275.0 140.1L274.1 141.5L276.6 144.6L274.7 147.2L270.8 147.8L269.1 146.1L266.4 146.7L261.9 143.1L260.4 141.4L259.6 140.2L259.4 138.9L256.9 136.4L257.3 134.2L256.2 132.4L255.7 130.9Z" fill="#f5bd6b"/><path d="M245.3 142.0L246.5 142.3L248.2 141.3L247.6 139.5L249.8 138.7L250.0 138.4L253.1 140.0L256.1 142.3L258.1 142.4L259.2 141.9L260.2 143.1L260.8 143.0L263.1 145.5L262.9 147.6L263.7 148.2L264.8 149.7L267.7 149.9L268.2 150.7L267.5 153.0L264.2 154.2L260.8 154.6L260.0 155.1L258.6 156.6L255.3 156.0L254.6 155.9L254.0 157.1L252.0 157.6L246.5 150.7L243.2 143.7Z" fill="#86d698"/><path d="M258.1 142.4L259.2 141.9L260.4 141.4L260.6 142.5L260.2 143.1L259.2 142.5Z" fill="#cccccc"/><path d="M263.7 148.2L264.8 149.7L267.7 149.9L268.2 148.4L268.9 147.4L269.2 145.8L268.0 145.7L266.4 147.8L264.2 147.8Z" fill="#86d698"/><path d="M262.8 147.6L263.3 147.8L264.2 146.7L263.6 145.5L262.7 146.3Z" fill="#cccccc"/><path d="M267.7 149.9L268.2 148.4L268.9 147.4L269.7 147.8L273.5 149.6L273.0 153.0L267.5 157.6L265.4 156.9L264.2 154.2L267.5 153.0L268.2 150.7Z" fill="#f08478"/><path d="M254.0 157.1L254.6 155.9L255.3 156.0L258.6 156.6L260.0 155.1L260.8 154.6L264.2 154.2L265.4 156.9L264.2 159.3L256.4 162.3L253.7 161.5L252.6 157.6Z" fill="#f08478"/><path d="M258.1 117.4L259.0 114.7L260.6 115.1L262.8 112.7L266.9 113.7L271.4 113.7L274.6 113.7L274.1 109.4L278.5 108.6L282.0 107.7L285.1 108.9L287.9 109.2L291.5 108.6L295.0 113.7L298.9 113.7L303.1 116.3L301.1 119.2L298.3 119.1L297.6 121.4L295.3 122.1L295.4 125.1L293.9 125.1L290.4 125.0L288.4 124.6L285.1 125.4L282.9 127.0L281.8 127.6L280.3 127.2L279.6 124.8L274.3 123.1L271.3 121.4L268.6 122.1L268.6 127.1L267.2 126.2L264.6 126.4L264.2 124.8L261.9 122.8L263.1 120.8L265.6 119.5L261.1 120.1L260.3 119.9Z" fill="#f08478"/><path d="M268.6 122.1L271.3 121.4L274.3 123.1L279.6 124.8L280.3 127.2L281.8 127.6L282.9 127.0L285.1 125.8L284.5 127.5L287.3 127.9L285.8 128.5L284.7 128.4L284.5 129.3L282.4 129.4L281.6 132.4L280.1 132.1L277.9 130.2L275.5 128.3L273.1 127.0L274.4 127.1L273.0 125.9L271.3 125.2L270.1 125.9L268.6 127.1Z" fill="#f5bd6b"/><path d="M264.6 126.4L267.2 126.2L268.6 127.1L270.1 125.9L271.3 125.2L273.0 125.9L274.4 127.1L273.1 127.0L275.5 128.3L277.9 130.2L280.1 132.1L278.3 132.5L276.3 134.7L274.3 134.4L274.3 133.1L272.2 132.0L269.9 131.0L268.0 131.2L266.4 132.3L266.3 132.8L264.7 130.1L265.8 128.1L264.7 127.7Z" fill="#cccccc"/><path d="M285.1 125.4L288.4 124.6L290.4 125.0L293.9 125.1L295.4 126.2L293.3 127.5L291.0 128.3L288.2 129.3L288.0 129.6L283.2 129.4L283.5 128.7L284.7 128.4L285.8 128.5L287.3 127.9L284.5 127.5L285.1 125.8Z" fill="#86d698"/><path d="M281.6 132.4L282.4 129.4L283.2 129.4L288.0 129.6L288.2 130.7L289.5 132.1L287.6 132.4L285.8 133.0L285.6 131.4L284.0 131.4L283.5 132.5Z" fill="#cccccc"/><path d="M273.5 136.4L274.3 134.4L276.3 134.7L278.3 132.5L280.1 132.1L281.6 132.4L283.5 132.5L284.0 131.4L285.6 131.4L285.8 133.0L287.6 132.4L289.5 132.1L289.1 132.8L285.8 133.7L285.3 136.0L284.0 137.4L283.5 138.9L280.0 140.1L279.9 141.4L275.7 142.0L274.0 141.5L275.0 140.1L273.9 139.5Z" fill="#f08478"/><path d="M274.1 141.5L275.7 142.0L279.9 141.4L280.0 140.1L283.5 138.9L284.0 137.4L285.3 136.0L285.8 133.7L289.1 132.8L290.6 133.3L292.6 134.5L291.5 135.7L288.4 135.5L288.8 137.6L289.9 138.5L289.0 140.1L287.3 141.9L284.3 143.8L284.0 145.5L285.1 147.9L282.0 148.9L279.6 149.6L274.7 147.8L276.6 144.6Z" fill="#f5bd6b"/><path d="M282.0 148.9L285.1 147.9L284.0 145.5L284.3 143.8L287.3 141.9L289.0 140.1L289.9 138.5L288.8 137.6L288.4 135.5L291.5 135.7L292.6 134.5L293.9 136.0L293.6 139.5L295.3 140.7L296.1 141.1L295.2 142.7L297.2 143.8L299.5 144.4L301.7 145.4L303.9 145.6L304.0 143.8L304.7 144.5L305.8 145.2L308.3 145.1L308.3 143.9L310.5 142.3L312.7 142.0L314.1 143.5L312.9 144.5L311.8 146.0L310.7 148.4L309.7 148.3L309.6 150.5L308.9 150.9L308.6 148.9L307.4 148.4L308.5 147.2L305.8 146.9L305.8 146.1L304.3 145.6L304.0 147.8L304.7 149.2L305.0 151.3L301.7 155.3L296.1 168.8L289.5 168.8L280.7 153.0Z" fill="#86d698"/><path d="M295.2 142.7L296.1 141.1L297.8 141.1L300.0 142.6L301.7 143.7L304.0 143.8L303.9 145.6L301.7 145.4L299.5 144.4L297.2 143.8Z" fill="#f5bd6b"/><path d="M304.7 144.5L305.5 143.5L307.7 143.7L308.3 145.1L305.8 145.2Z" fill="#cccccc"/><path d="M304.0 147.8L304.3 145.6L305.8 146.1L305.8 146.9L308.5 147.2L307.4 148.4L308.6 148.9L308.9 150.9L308.7 152.5L307.2 151.9L305.0 151.6L304.7 149.2Z" fill="#f5bd6b"/><path d="M308.7 152.5L308.9 150.9L309.6 150.5L309.7 148.3L310.7 148.4L311.8 146.0L312.9 144.5L314.1 143.5L315.4 144.2L315.7 146.3L314.5 147.8L315.9 148.4L316.3 150.6L318.4 151.2L317.2 152.7L315.8 153.4L314.6 154.8L315.9 157.1L315.1 158.7L316.2 160.8L316.7 162.3L315.8 164.3L312.7 165.4L309.4 158.7L307.7 153.0Z" fill="#f5bd6b"/><path d="M314.6 154.8L315.8 153.4L317.2 152.7L317.7 153.6L318.4 153.6L318.3 155.9L319.4 155.1L321.5 155.0L322.4 157.0L323.3 157.9L323.2 159.4L320.4 159.5L319.7 160.3L320.3 162.4L319.3 162.7L317.7 162.1L317.4 165.4L318.8 167.7L319.5 168.6L319.1 169.0L318.3 169.1L317.3 168.2L316.0 168.2L314.3 166.6L315.8 164.3L316.7 162.3L316.2 160.8L315.1 158.7L315.9 157.1Z" fill="#f5bd6b"/><path d="M317.2 152.7L318.4 151.2L319.1 150.3L319.9 151.1L320.6 152.1L322.2 152.4L321.5 153.7L322.8 154.6L324.5 156.6L325.5 158.5L325.4 159.2L323.7 159.5L323.2 159.4L323.3 157.9L322.4 157.0L321.5 155.0L319.4 155.1L318.3 155.9L318.4 153.6L317.7 153.6Z" fill="#cccccc"/><path d="M319.5 150.3L321.0 149.8L322.9 149.2L324.5 149.8L325.9 151.3L326.5 151.9L324.8 154.2L325.9 157.0L328.1 159.9L328.1 163.8L324.3 166.6L322.1 166.2L322.0 163.9L322.7 163.3L323.7 162.4L325.4 161.8L325.4 159.2L325.5 158.5L324.5 156.6L322.8 154.6L321.5 153.7L322.2 152.4L320.6 152.1L319.9 151.1Z" fill="#86d698"/><path d="M319.7 160.3L320.4 159.5L323.2 159.4L323.7 159.5L325.4 159.2L325.4 161.8L323.7 162.4L322.7 163.3L322.0 163.9L321.0 164.3L320.3 162.4Z" fill="#86d698"/><path d="M317.3 168.2L318.3 169.1L319.1 169.0L319.5 168.6L321.5 168.8L322.6 174.3L321.0 174.3L317.1 172.1Z" fill="#f5bd6b"/><path d="M303.6 116.3L307.2 114.4L311.6 115.1L314.9 112.1L319.5 113.2L319.6 114.3L324.8 115.1L329.2 116.0L333.1 114.7L335.5 115.4L334.2 117.7L336.4 118.3L338.9 119.8L334.7 121.2L330.3 122.1L329.8 123.9L322.6 126.4L317.1 125.2L313.2 125.1L312.1 123.2L307.2 121.9L306.8 119.4Z" fill="#cccccc"/><path d="M343.9 128.8L345.8 126.6L348.2 127.0L349.9 125.5L351.0 125.8L351.3 127.5L348.5 130.6L346.9 131.0L344.7 131.7L343.6 130.1Z" fill="#cccccc"/><path d="M344.7 131.7L346.9 131.0L348.5 130.6L350.7 132.6L350.2 136.4L345.2 136.4Z" fill="#f5bd6b"/><path d="M288.2 129.3L291.0 128.3L293.3 127.5L295.4 126.2L295.4 125.1L295.3 122.1L297.6 121.4L298.3 119.1L301.1 119.2L303.1 116.3L303.6 116.3L306.8 119.4L307.2 121.9L312.1 123.2L313.2 125.1L317.1 125.2L322.6 126.4L329.8 123.9L330.3 122.1L334.7 121.2L338.9 119.8L336.4 118.3L334.2 117.7L335.5 115.4L336.7 115.8L338.3 114.8L340.0 111.9L339.4 111.0L340.3 110.3L343.0 110.0L345.8 111.0L347.4 114.7L347.5 115.6L351.1 116.8L351.3 118.4L353.5 117.8L355.4 117.6L354.6 119.0L353.5 122.0L351.6 122.3L351.3 124.8L350.9 125.5L349.9 125.5L348.2 127.0L345.8 126.6L343.9 128.8L342.5 132.6L343.6 137.6L342.5 142.5L339.2 149.6L331.4 153.0L327.6 153.3L325.9 151.3L324.5 149.8L322.9 149.2L321.0 149.8L319.5 150.3L319.1 150.3L318.4 151.2L316.3 150.6L315.9 148.4L314.5 147.8L315.7 146.3L315.4 144.2L314.1 143.5L312.7 142.0L310.5 142.3L308.3 143.9L307.7 143.7L305.5 143.5L304.7 144.5L304.0 143.8L301.7 143.7L300.0 142.6L297.8 141.1L296.1 141.1L295.3 140.7L293.6 139.5L293.9 136.0L292.6 134.5L290.6 133.3L289.1 132.8L289.5 132.1L288.2 130.7L288.0 129.6Z" fill="#f08478"/><path d="M260.8 120.1L263.6 119.4L265.3 120.1L265.3 122.1L263.1 122.8L262.3 123.1L263.1 124.8L264.7 125.5L264.9 127.5L266.4 128.1L265.3 130.1L266.1 132.6L264.2 133.0L261.9 132.1L260.8 130.7L261.4 128.4L260.3 126.4L259.2 124.8L258.6 122.8L258.6 121.4Z" fill="#fff" stroke="none"/></g></g><clipPath id="cNG"><path d="M351.3 176.3L354.6 176.3L355.2 178.2L356.3 179.0L358.5 177.2L362.3 178.3L366.2 179.6L367.8 181.3L369.8 182.0L368.9 182.9L370.0 184.2L372.8 186.8L371.7 186.9L368.9 185.9L366.2 183.9L364.9 185.4L362.3 185.5L360.1 184.2L359.0 184.7L359.9 182.9L359.0 181.5L356.3 180.3L353.5 179.8L353.3 178.7L354.6 177.8L352.4 177.9L351.3 177.1Z"/></clipPath><g clip-path="url(#cNG)"><path d="M351.3 176.3L354.6 176.3L355.2 178.2L356.3 179.0L358.5 177.2L362.3 178.3L366.2 179.6L367.8 181.3L369.8 182.0L368.9 182.9L370.0 184.2L372.8 186.8L371.7 186.9L368.9 185.9L366.2 183.9L364.9 185.4L362.3 185.5L360.1 184.2L359.0 184.7L359.9 182.9L359.0 181.5L356.3 180.3L353.5 179.8L353.3 178.7L354.6 177.8L352.4 177.9L351.3 177.1Z" fill="#f5bd6b" stroke="none"/><path d="M362.3 175.4L377.8 175.4L377.8 188.7L362.3 188.7Z" fill="#f08478"/></g><path d="M141.4 118.5L145.0 119.5L148.3 119.9L148.7 118.4L147.8 116.1L145.4 115.1L145.6 112.8L143.4 114.4L141.7 117.3Z" fill="#f5bd6b" stroke-width=".3"/><path d="M65.3 114.0L68.9 114.8L70.8 117.4L68.4 116.8Z" fill="#f5bd6b" stroke-width=".3"/><path d="M60.1 108.9L61.4 109.2L62.3 111.9L60.9 110.7Z" fill="#f5bd6b" stroke-width=".3"/><path d="M180.0 90.3L182.5 88.6L186.9 89.0L190.8 89.0L191.8 91.2L190.3 92.4L186.4 93.8L182.0 93.1L182.5 91.5L180.3 91.4Z" fill="#86d698" stroke-width=".3"/><path d="M113.2 150.9L115.3 149.6L118.0 149.3L121.9 151.1L125.0 152.8L121.3 153.2L120.8 152.2L119.7 151.3L116.4 150.3L114.7 150.5Z" fill="#86d698" stroke-width=".3"/><path d="M127.7 153.4L129.6 153.3L131.4 154.6L129.6 155.0L127.6 155.3Z" fill="#86d698" stroke-width=".3"/><path d="M261.2 188.7L262.5 192.6L261.4 194.3L260.3 197.8L258.9 203.4L256.4 204.1L255.0 201.8L254.6 199.8L255.8 197.5L255.3 194.3L257.5 192.9L259.7 190.4Z" fill="#f08478" stroke-width=".3"/><path d="M200.5 115.0L202.9 114.7L205.1 114.1L208.3 113.4L208.7 111.2L207.1 110.7L206.6 108.9L205.1 107.7L204.6 106.2L204.6 103.8L202.4 103.5L203.3 102.0L201.3 102.0L200.4 103.8L200.0 105.4L200.7 107.1L201.5 108.0L202.9 107.9L203.5 110.0L201.8 110.3L202.2 111.5L201.1 112.5L203.5 113.1L202.2 113.5Z" fill="#86d698" stroke-width=".3"/><path d="M200.2 111.9L200.0 110.3L200.7 108.5L199.9 107.4L197.8 107.4L195.8 108.9L196.0 110.3L195.3 112.2L196.3 113.0L198.0 112.5Z" fill="#86d698" stroke-width=".3"/><path d="M220.6 131.4L224.0 131.1L223.6 133.0L220.6 131.9Z" fill="#86d698" stroke-width=".3"/><path d="M215.8 127.5L217.5 127.5L217.4 129.8L216.2 130.1Z" fill="#86d698" stroke-width=".3"/><path d="M216.3 125.1L217.3 125.1L217.1 127.0L216.4 126.7Z" fill="#f5bd6b" stroke-width=".3"/><path d="M232.7 134.4L235.8 134.8L235.7 135.2L232.7 134.9Z" fill="#f5bd6b" stroke-width=".3"/><path d="M242.4 135.0L245.0 134.3L244.3 135.3L243.0 135.7Z" fill="#f5bd6b" stroke-width=".3"/><path d="M295.0 164.6L296.4 166.0L297.0 167.7L295.6 168.8L294.8 167.7Z" fill="#86d698" stroke-width=".3"/><path d="M351.2 136.4L352.9 134.5L356.8 134.3L357.9 132.0L359.9 131.6L361.0 130.1L361.2 128.0L362.7 127.0L363.4 129.4L362.3 131.4L362.2 133.9L361.2 135.2L359.9 135.5L357.9 135.7L356.6 137.0L355.7 135.7L353.5 136.0L351.3 136.5Z" fill="#86d698" stroke-width=".3"/><path d="M361.2 126.8L361.6 124.6L363.1 121.6L365.1 123.2L367.1 123.1L367.3 124.4L364.9 126.2L362.3 125.5Z" fill="#86d698" stroke-width=".3"/><path d="M350.2 137.0L352.1 137.0L351.8 139.5L351.0 140.1L350.4 138.9L349.9 137.6Z" fill="#86d698" stroke-width=".3"/><path d="M352.9 136.7L355.2 136.2L354.9 137.0L353.5 137.9L352.7 137.4Z" fill="#86d698" stroke-width=".3"/><path d="M363.4 120.8L365.1 120.1L364.5 116.6L366.2 116.3L364.9 112.2L364.5 108.8L363.4 110.0L363.4 113.7L363.4 118.0Z" fill="#f08478" stroke-width=".3"/><path d="M340.3 147.0L341.4 147.2L340.3 150.7L339.4 149.6Z" fill="#86d698" stroke-width=".3"/><path d="M327.0 153.0L329.2 153.0L328.7 154.8L326.8 154.8Z" fill="#f08478" stroke-width=".3"/><path d="M339.7 154.8L341.6 154.8L341.4 157.6L340.8 159.3L343.6 161.0L343.0 161.2L341.4 160.1L339.7 159.9L339.2 157.6Z" fill="#f5bd6b" stroke-width=".3"/><path d="M341.4 162.3L345.2 161.5L345.2 163.8L343.6 164.9L341.9 164.9Z" fill="#f5bd6b" stroke-width=".3"/><path d="M341.4 167.7L343.0 166.0L345.2 164.6L346.3 167.1L345.2 169.1L343.6 168.6L342.5 167.1Z" fill="#f5bd6b" stroke-width=".3"/><path d="M336.1 166.2L338.6 163.0L338.8 163.7L336.5 166.6Z" fill="#f5bd6b" stroke-width=".3"/><path d="M327.0 173.7L328.1 173.4L329.8 172.4L331.4 171.8L333.6 169.9L335.6 167.7L336.6 168.4L338.3 169.7L337.0 170.8L336.7 172.6L337.9 174.3L336.4 176.0L335.3 177.6L334.7 179.6L333.1 179.8L331.4 178.9L329.8 179.0L328.4 178.5L328.1 176.8L327.0 175.1Z" fill="#f5bd6b" stroke-width=".3"/><path d="M311.9 169.2L314.3 169.7L317.4 172.3L321.0 174.8L322.1 177.4L323.7 178.7L323.5 181.8L322.1 181.8L319.6 179.8L317.7 177.1L315.7 173.7L313.8 171.8Z" fill="#f5bd6b" stroke-width=".3"/><path d="M322.9 182.6L324.6 182.0L326.5 182.6L329.0 182.5L331.1 183.0L333.1 183.9L332.9 185.0L329.2 184.6L325.9 184.0L324.2 183.6Z" fill="#f5bd6b" stroke-width=".3"/><path d="M333.6 184.5L338.1 184.6L342.5 184.6L342.5 185.1L338.1 185.4L333.6 185.1Z" fill="#f5bd6b" stroke-width=".3"/><path d="M343.0 186.8L344.7 185.4L347.1 184.7L346.3 185.6L344.1 186.7Z" fill="#f5bd6b" stroke-width=".3"/><path d="M338.9 174.5L340.0 174.0L342.5 174.3L344.9 173.6L344.1 175.0L340.8 174.8L339.4 176.3L340.8 176.5L342.8 176.4L341.4 177.4L341.9 179.3L342.5 180.4L341.7 181.3L340.6 178.7L339.7 178.7L339.6 181.5L338.6 181.5L338.6 179.3L337.8 178.4L338.9 175.6Z" fill="#f5bd6b" stroke-width=".3"/><path d="M347.4 173.2L348.8 173.7L348.0 176.0L347.4 174.8Z" fill="#f5bd6b" stroke-width=".3"/><path d="M348.0 178.7L351.1 178.9L349.6 179.4Z" fill="#f5bd6b" stroke-width=".3"/><path d="M370.6 181.6L372.8 181.5L374.7 180.0L373.9 181.5L372.2 182.4Z" fill="#f08478" stroke-width=".3"/><path d="M364.0 187.2L365.1 189.3L365.3 191.3L367.1 192.1L367.8 195.5L368.9 197.0L371.1 198.3L373.1 201.8L375.6 203.9L376.1 207.1L375.6 210.7L373.9 213.8L372.2 218.5L370.0 219.3L368.4 220.7L366.2 219.8L365.1 220.5L361.8 219.4L360.7 216.9L359.0 216.4L359.0 213.8L358.8 212.7L356.8 215.4L356.3 215.4L354.6 212.9L351.3 211.3L349.1 211.4L345.8 212.3L343.6 213.2L343.0 214.3L339.2 214.3L337.0 215.6L334.7 215.4L333.6 214.8L334.4 211.9L333.6 209.5L332.8 206.5L332.0 204.7L332.2 201.2L332.8 199.8L335.3 198.6L338.1 197.8L340.8 197.0L341.7 195.2L343.0 194.3L343.6 193.5L345.2 191.5L346.9 190.8L348.5 192.0L349.6 192.1L350.2 189.8L351.1 189.1L352.9 188.7L353.2 187.9L355.7 188.9L357.7 188.7L356.8 190.4L356.3 192.1L357.9 193.2L360.4 194.9L362.1 194.9L362.9 192.6L363.1 189.8Z" fill="#86d698" stroke-width=".3"/><path d="M366.4 222.9L368.4 223.5L370.4 223.2L370.0 226.2L368.7 226.8L367.1 225.3Z" fill="#86d698" stroke-width=".3"/><path d="M397.3 214.9L399.1 216.0L400.4 217.5L400.9 218.8L403.7 219.1L402.0 221.1L401.9 222.4L400.2 224.1L399.6 223.7L399.8 222.0L398.5 221.1L399.5 219.4L399.3 217.5L397.6 215.9Z" fill="#86d698" stroke-width=".3"/><path d="M397.3 222.7L399.1 224.2L397.6 226.6L395.6 228.0L395.1 230.0L393.2 231.0L391.6 230.5L390.4 229.6L392.1 227.6L394.9 226.0L396.0 224.2Z" fill="#86d698" stroke-width=".3"/><path d="M263.6 78.8L265.3 80.2L270.2 80.4L268.6 76.7L268.6 73.5L271.9 70.3L278.5 68.0L282.9 66.8L279.6 69.6L273.5 72.5L269.7 74.6L266.9 76.7Z" fill="#f08478" stroke-width=".3"/><path d="M218.9 60.8L222.2 65.7L225.6 67.8L230.0 63.8L227.8 60.8L236.6 59.1L230.0 58.3L224.4 59.6Z" fill="#f5bd6b" stroke-width=".3"/><path d="M258.6 58.3L266.4 59.1L273.0 57.0L270.8 55.2L261.9 57.0Z" fill="#f08478" stroke-width=".3"/><path d="M311.6 62.1L317.1 64.5L322.6 62.1L317.1 58.3L311.6 57.0Z" fill="#f08478" stroke-width=".3"/><path d="M357.9 70.3L361.2 72.0L365.6 71.4L367.8 70.5L362.3 68.9Z" fill="#f08478" stroke-width=".3"/><path d="M403.7 79.4L407.0 78.8L407.5 79.8L404.2 80.2Z" fill="#f08478" stroke-width=".3"/><path d="M367.8 122.8L370.6 121.4L370.8 121.7L368.2 123.1Z" fill="#f08478" stroke-width=".3"/><path d="M108.6 54.6L117.5 52.5L131.0 51.5L137.8 52.8L132.1 55.7L125.8 57.7L121.6 60.4L122.7 63.0L119.5 66.1L115.4 67.1L109.1 67.1L112.8 64.5L114.3 61.9L111.2 60.4L115.9 58.3L117.5 56.2L111.2 56.4Z" fill="#f5bd6b" stroke="none"/><path d="M100.8 58.3L103.9 56.2L108.1 57.7L110.1 60.4L108.1 63.0L104.9 63.0L102.8 60.4Z" fill="#f5bd6b" stroke="none"/><path d="M104.9 68.2L108.1 69.2L117.5 69.8L118.0 71.3L109.1 71.6L105.5 70.3Z" fill="#f5bd6b" stroke="none"/><path d="M108.1 76.0L111.2 74.4L112.2 77.1L114.3 75.0L117.5 75.0L119.0 77.1L123.7 77.6L131.0 81.2L132.1 84.4L131.0 86.5L137.3 88.0L135.7 90.1L133.6 89.6L134.2 93.2L132.1 94.8L127.9 92.2L125.8 89.6L126.8 86.5L123.7 82.3L117.5 80.7L113.3 80.2L109.1 79.7Z" fill="#f5bd6b" stroke="none"/><path d="M76.2 77.1L79.9 76.0L85.6 76.0L89.3 75.0L91.4 78.1L93.4 81.8L89.3 82.8L83.0 83.3L78.8 80.7Z" fill="#f5bd6b" stroke="none"/><path d="M68.9 76.0L70.5 72.9L76.2 72.9L77.8 74.4L73.6 77.1L71.0 78.6Z" fill="#f5bd6b" stroke="none"/><path d="M77.8 69.2L81.4 68.2L84.1 69.8L81.4 71.0Z" fill="#f5bd6b" stroke="none"/><path d="M72.6 67.1L76.2 65.6L78.0 66.6L74.7 68.5Z" fill="#f5bd6b" stroke="none"/><path d="M85.6 69.0L89.8 69.5L88.7 71.0L86.3 70.6Z" fill="#f5bd6b" stroke="none"/><path d="M95.8 74.4L98.9 73.9L99.4 77.6L96.6 78.1Z" fill="#f5bd6b" stroke="none"/><path d="M101.8 73.9L105.7 73.7L104.1 76.0L101.8 76.0Z" fill="#f5bd6b" stroke="none"/><path d="M92.2 61.4L96.1 62.4L95.5 64.1L92.8 63.1Z" fill="#f5bd6b" stroke="none"/><path d="M96.1 67.9L98.8 68.2L98.6 70.4L96.5 70.4Z" fill="#f5bd6b" stroke="none"/><path d="M100.8 69.8L103.5 69.8L102.9 71.4L101.0 71.4Z" fill="#f5bd6b" stroke="none"/><path d="M113.3 82.8L116.6 83.3L116.0 87.5L112.2 87.5Z" fill="#f5bd6b" stroke="none"/><path d="M121.6 84.9L123.9 84.9L123.9 86.6L121.6 86.6Z" fill="#f5bd6b" stroke="none"/><path d="M111.7 90.6L116.0 91.7L115.4 92.9L111.7 92.7Z" fill="#f5bd6b" stroke="none"/><path d="M158.1 98.6L152.3 94.8L148.8 90.1L148.2 86.0L149.9 83.1L146.4 79.5L146.4 76.0L143.5 71.3L139.4 68.4L132.4 67.2L128.3 64.0L132.9 60.8L135.9 57.3L141.7 54.9L147.6 54.3L152.3 54.9L158.1 52.0L165.2 50.8L172.2 50.2L180.4 52.0L181.6 54.3L187.4 55.5L192.4 55.5L188.6 57.9L184.5 61.4L183.3 64.9L185.7 67.8L185.1 71.3L181.6 73.7L182.8 76.6L179.2 80.1L175.7 82.5L171.0 85.4L165.2 88.3L161.7 92.4L159.7 97.9Z" fill="#cccccc" stroke="none"/></g></svg></div></div>
<div class="card" style="left:175px;top:531.300px;width:413.8px;height:110px"><div class="in" style="left:-0.5px"><div class="ctitle" style="top:15px;line-height:15px;letter-spacing:-.2px">Top Pages</div><svg class="abs" style="left:387.5px;top:13.7px" width="11.6" height="11.6" viewBox="0 0 24 24"><g fill="#94a0ae"><rect x="9.700" y="0.500" width="4.600" height="6" rx=".8" transform="rotate(0 12 12)"/><rect x="9.700" y="0.500" width="4.600" height="6" rx=".8" transform="rotate(45 12 12)"/><rect x="9.700" y="0.500" width="4.600" height="6" rx=".8" transform="rotate(90 12 12)"/><rect x="9.700" y="0.500" width="4.600" height="6" rx=".8" transform="rotate(135 12 12)"/><rect x="9.700" y="0.500" width="4.600" height="6" rx=".8" transform="rotate(180 12 12)"/><rect x="9.700" y="0.500" width="4.600" height="6" rx=".8" transform="rotate(225 12 12)"/><rect x="9.700" y="0.500" width="4.600" height="6" rx=".8" transform="rotate(270 12 12)"/><rect x="9.700" y="0.500" width="4.600" height="6" rx=".8" transform="rotate(315 12 12)"/></g><circle cx="12" cy="12" r="6.200" fill="none" stroke="#94a0ae" stroke-width="4.200"/></svg><div class="hr" style="top:41.700px"></div><div class="th" style="left:12px;top:46.800px;line-height:12px">URL PATH</div><div class="th" style="right:12.500px;top:46.800px;line-height:12px">CWV RATING</div><div class="hr" style="top:63.800px"></div><div class="url" style="left:12px;top:72px;line-height:16px;letter-spacing:0.22px">/docs/get-started</div><div class="cnt" style="left:114px;top:73.700px;line-height:14px">8.8 K</div><div class="bar" style="left:246px;top:76.7px;width:130.5px;background:linear-gradient(90deg,#5cc36a 109.3px,#f1a640 109.3px,#f1a640 125.0px,#e9564b 125.0px)"></div><div class="pct" style="right:12px;top:73.700px;line-height:14px">84%</div></div></div>
<div class="card" style="left:601px;top:531.300px;width:413.3px;height:110px"><div class="in" style="left:-1.0px"><div class="ctitle" style="top:15px;line-height:15px;letter-spacing:-.2px">Slow Pages</div><svg class="abs" style="left:387.5px;top:13.7px" width="11.6" height="11.6" viewBox="0 0 24 24"><g fill="#94a0ae"><rect x="9.700" y="0.500" width="4.600" height="6" rx=".8" transform="rotate(0 12 12)"/><rect x="9.700" y="0.500" width="4.600" height="6" rx=".8" transform="rotate(45 12 12)"/><rect x="9.700" y="0.500" width="4.600" height="6" rx=".8" transform="rotate(90 12 12)"/><rect x="9.700" y="0.500" width="4.600" height="6" rx=".8" transform="rotate(135 12 12)"/><rect x="9.700" y="0.500" width="4.600" height="6" rx=".8" transform="rotate(180 12 12)"/><rect x="9.700" y="0.500" width="4.600" height="6" rx=".8" transform="rotate(225 12 12)"/><rect x="9.700" y="0.500" width="4.600" height="6" rx=".8" transform="rotate(270 12 12)"/><rect x="9.700" y="0.500" width="4.600" height="6" rx=".8" transform="rotate(315 12 12)"/></g><circle cx="12" cy="12" r="6.200" fill="none" stroke="#94a0ae" stroke-width="4.200"/></svg><div class="hr" style="top:41.700px"></div><div class="th" style="left:12px;top:46.800px;line-height:12px">URL PATH</div><div class="th" style="right:12.500px;top:46.800px;line-height:12px">CWV RATING</div><div class="hr" style="top:63.800px"></div><div class="url" style="left:12px;top:72px;line-height:16px;letter-spacing:0.22px">/blog/how-to-optimize</div><div class="cnt" style="left:139px;top:73.700px;line-height:14px">2.2 K</div><div class="bar" style="left:246px;top:76.7px;width:130.5px;background:linear-gradient(90deg,#5cc36a 69.4px,#f1a640 69.4px,#f1a640 110.9px,#e9564b 110.9px)"></div><div class="pct" style="right:12px;top:73.700px;line-height:14px">53%</div></div></div>
</div>
</body>
</html>
